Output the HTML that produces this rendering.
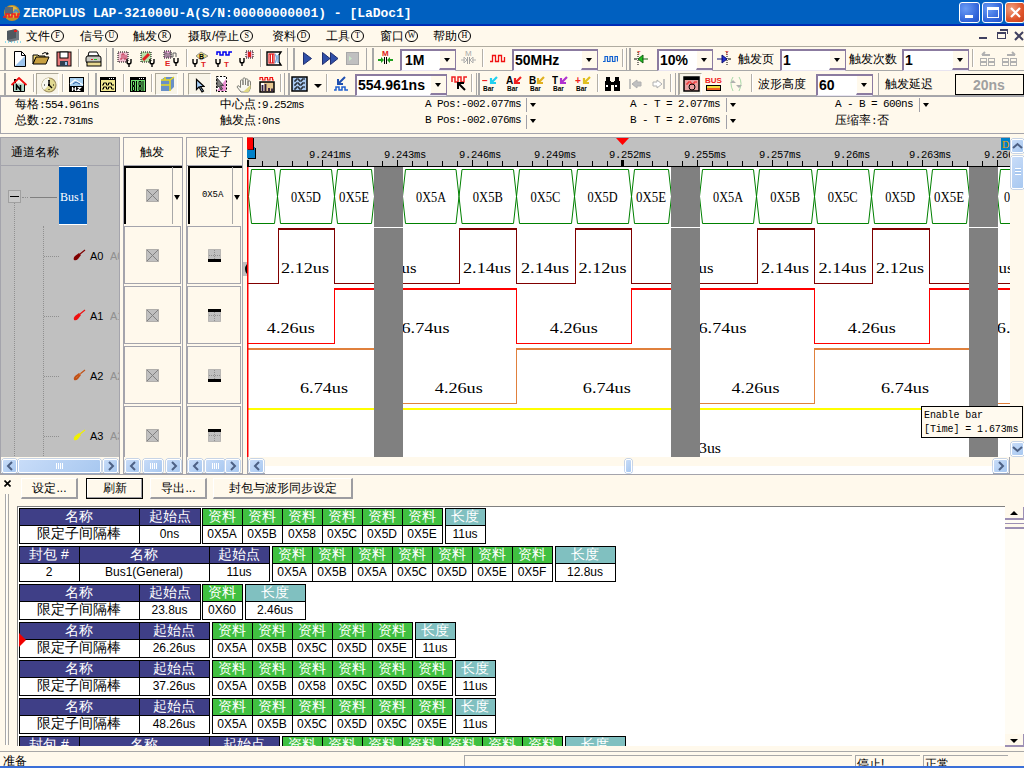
<!DOCTYPE html>
<html><head><meta charset="utf-8">
<style>
*{margin:0;padding:0;box-sizing:border-box}
html,body{width:1024px;height:768px;overflow:hidden;background:#FFF9EC;font-family:"Liberation Sans",sans-serif;font-size:12px;color:#000}
.a{position:absolute}
.t{white-space:nowrap;line-height:1}
.mono{font-family:"Liberation Mono",monospace;font-size:10px;white-space:nowrap;line-height:1}
.wb{top:2px;width:21px;height:21px;border:1px solid #fff;border-radius:3px;background:radial-gradient(circle at 30% 30%,#6A9BF5,#2F62D8 70%,#2453C4)}
.wb.x{background:radial-gradient(circle at 30% 30%,#F0A080,#E0542A 60%,#C4401C)}
.sep{width:2px;height:19px;border-left:1px solid #ACA899;border-right:1px solid #fff}
.grip{width:3px;height:21px;border-left:1px solid #fff;border-right:1px solid #ACA899}
.combo{background:#fff;border:2px solid #9C8FAE;border-right-color:#D8D0E0;border-bottom-color:#D8D0E0}
.cbtxt{font-weight:bold;font-size:15px;line-height:1;white-space:nowrap}
.dd{width:16px;background:#FFF9EC;border-left:1px solid #fff;border-right:1px solid #A898B8;border-bottom:1px solid #A898B8}
.tri{width:0;height:0;border-left:4px solid transparent;border-right:4px solid transparent;border-top:4px solid #000}
.cjk{font-size:12px;white-space:nowrap;line-height:1}
</style></head><body>

<div class="a" style="left:0;top:0;width:1024px;height:26px;background:linear-gradient(#0060C0 0,#0060C0 23.5px,#0030B8 24px,#0028B4 26px)"></div>
<svg class="a" style="left:2px;top:3px" width="20" height="20" viewBox="0 0 20 20"><circle cx="10" cy="10" r="8" fill="#C09028"/><circle cx="10" cy="9" r="6" fill="#E0B840"/><rect x="3" y="4" width="8" height="7" fill="#586878"/><path d="M1 14h3v-3h3v3h3v-3h3v3h3v-3h2" stroke="#F02020" stroke-width="1.6" fill="none"/><path d="M11 9h2v-2h2v2h2" stroke="#2080F0" stroke-width="1.2" fill="none"/></svg>
<div class="a t" style="left:23px;top:7px;color:#fff;font-family:'Liberation Mono',monospace;font-weight:bold;font-size:13px;letter-spacing:-0.03px">ZEROPLUS LAP-321000U-A(S/N:00000000001) - [LaDoc1]</div>
<div class="a wb" style="left:959px"><div class="a" style="left:5px;top:12px;width:8px;height:3px;background:#fff"></div></div>
<div class="a wb" style="left:982px"><div class="a" style="left:4px;top:4px;width:12px;height:11px;border:1px solid #fff;border-top-width:3px"></div></div>
<div class="a wb x" style="left:1005px;width:20px"><svg class="a" style="left:3px;top:3px" width="13" height="13"><path d="M2 2L11 11M11 2L2 11" stroke="#fff" stroke-width="2.2"/></svg></div>
<svg class="a" style="left:4px;top:27px" width="18" height="17"><path d="M3 4l9-2 3 2v9l-9 2-3-2z" fill="#707880"/><path d="M3 4l9-2v9l-9 2z" fill="#50585f"/><rect x="10" y="3" width="3" height="2" fill="#E02020"/><path d="M1 15h16" stroke="#20C0F0" stroke-dasharray="1 2"/></svg>
<div class="a cjk" style="left:26px;top:30px">文件<span style="display:inline-block;width:13px;height:12px;border:1px solid #000;border-radius:6px;font-size:8px;text-align:center;line-height:10px;margin-left:1px;vertical-align:top;margin-top:0px;font-family:Liberation Serif">F</span></div>
<div class="a cjk" style="left:80px;top:30px">信号<span style="display:inline-block;width:13px;height:12px;border:1px solid #000;border-radius:6px;font-size:8px;text-align:center;line-height:10px;margin-left:1px;vertical-align:top;margin-top:0px;font-family:Liberation Serif">U</span></div>
<div class="a cjk" style="left:133px;top:30px">触发<span style="display:inline-block;width:13px;height:12px;border:1px solid #000;border-radius:6px;font-size:8px;text-align:center;line-height:10px;margin-left:1px;vertical-align:top;margin-top:0px;font-family:Liberation Serif">R</span></div>
<div class="a cjk" style="left:188px;top:30px">摄取/停止<span style="display:inline-block;width:13px;height:12px;border:1px solid #000;border-radius:6px;font-size:8px;text-align:center;line-height:10px;margin-left:1px;vertical-align:top;margin-top:0px;font-family:Liberation Serif">S</span></div>
<div class="a cjk" style="left:272px;top:30px">资料<span style="display:inline-block;width:13px;height:12px;border:1px solid #000;border-radius:6px;font-size:8px;text-align:center;line-height:10px;margin-left:1px;vertical-align:top;margin-top:0px;font-family:Liberation Serif">D</span></div>
<div class="a cjk" style="left:326px;top:30px">工具<span style="display:inline-block;width:13px;height:12px;border:1px solid #000;border-radius:6px;font-size:8px;text-align:center;line-height:10px;margin-left:1px;vertical-align:top;margin-top:0px;font-family:Liberation Serif">T</span></div>
<div class="a cjk" style="left:380px;top:30px">窗口<span style="display:inline-block;width:13px;height:12px;border:1px solid #000;border-radius:6px;font-size:8px;text-align:center;line-height:10px;margin-left:1px;vertical-align:top;margin-top:0px;font-family:Liberation Serif">W</span></div>
<div class="a cjk" style="left:433px;top:30px">帮助<span style="display:inline-block;width:13px;height:12px;border:1px solid #000;border-radius:6px;font-size:8px;text-align:center;line-height:10px;margin-left:1px;vertical-align:top;margin-top:0px;font-family:Liberation Serif">H</span></div>
<div class="a" style="left:979px;top:37px;width:8px;height:2px;background:#404060"></div>
<div class="a" style="left:997px;top:32px;width:9px;height:7px;border:1px solid #404060;border-top-width:2px"></div>
<div class="a" style="left:1000px;top:29px;width:8px;height:5px;border-top:2px solid #404060;border-right:1px solid #404060"></div>
<svg class="a" style="left:1014px;top:31px" width="10" height="10"><path d="M1 1L9 9M9 1L1 9" stroke="#404060" stroke-width="2"/></svg>
<div class="a" style="left:0;top:46px;width:1024px;height:1px;background:#B0ACA0"></div>
<div class="a" style="left:0px;top:70px;width:1024px;height:1px;background:#A8A8A8"></div>
<div class="a" style="left:0px;top:95px;width:1024px;height:1px;background:#A8A8A8"></div>
<div class="a" style="left:4px;top:48px;width:2px;height:22px;background:#A8A8A8"></div>
<div class="a" style="left:112px;top:48px;width:2px;height:22px;background:#A8A8A8"></div>
<div class="a" style="left:293px;top:48px;width:2px;height:22px;background:#A8A8A8"></div>
<div class="a" style="left:372px;top:48px;width:2px;height:22px;background:#A8A8A8"></div>
<div class="a" style="left:629px;top:48px;width:2px;height:22px;background:#A8A8A8"></div>
<div class="a" style="left:106px;top:48px;width:1px;height:22px;background:#A8A8A8"></div>
<div class="a" style="left:287px;top:48px;width:1px;height:22px;background:#A8A8A8"></div>
<div class="a" style="left:366px;top:48px;width:1px;height:22px;background:#A8A8A8"></div>
<div class="a" style="left:626px;top:48px;width:1px;height:22px;background:#A8A8A8"></div>
<div class="a" style="left:4px;top:73px;width:2px;height:22px;background:#A8A8A8"></div>
<div class="a" style="left:95px;top:73px;width:2px;height:22px;background:#A8A8A8"></div>
<div class="a" style="left:188px;top:73px;width:2px;height:22px;background:#A8A8A8"></div>
<div class="a" style="left:288px;top:73px;width:2px;height:22px;background:#A8A8A8"></div>
<div class="a" style="left:478px;top:73px;width:2px;height:22px;background:#A8A8A8"></div>
<div class="a" style="left:678px;top:73px;width:2px;height:22px;background:#A8A8A8"></div>
<div class="a" style="left:88px;top:73px;width:1px;height:22px;background:#A8A8A8"></div>
<div class="a" style="left:183px;top:73px;width:1px;height:22px;background:#A8A8A8"></div>
<div class="a" style="left:284px;top:73px;width:1px;height:22px;background:#A8A8A8"></div>
<div class="a" style="left:476px;top:73px;width:1px;height:22px;background:#A8A8A8"></div>
<div class="a" style="left:675px;top:73px;width:1px;height:22px;background:#A8A8A8"></div>
<div class="a" style="left:878px;top:73px;width:1px;height:22px;background:#A8A8A8"></div>
<svg class="a" style="left:12px;top:51px" width="16" height="16" viewBox="0 0 16 16"><path d="M2.5 0.5h7l4 4v11h-11z" fill="#fff" stroke="#000"/><path d="M3 15L13 5v10z" fill="#9CC4EC"/><path d="M9.5 0.5v4h4" fill="none" stroke="#000"/></svg>
<svg class="a" style="left:32px;top:50px" width="18" height="16" viewBox="0 0 18 16"><path d="M1 5h5l1 1h6v2H4L1 14z" fill="#F0D878" stroke="#000"/><path d="M1 14l3-7h13l-3 7z" fill="#C8A040" stroke="#000"/><path d="M10 4q3-3 6 0" stroke="#000" fill="none"/><path d="M15 2l2 2-3 1" fill="#000"/></svg>
<svg class="a" style="left:56px;top:51px" width="16" height="16" viewBox="0 0 16 16"><rect x="1" y="1" width="14" height="14" fill="#E87878" stroke="#000"/><rect x="4" y="1" width="8" height="6" fill="#fff" stroke="#000"/><rect x="4" y="10" width="8" height="5" fill="#304050"/><rect x="9" y="11" width="2" height="3" fill="#9CC4EC"/></svg>
<div class="a" style="left:78px;top:49px;width:1px;height:18px;background:#B4B0A8"></div>
<div class="a" style="left:79px;top:49px;width:1px;height:18px;background:#FFFFFF"></div>
<svg class="a" style="left:85px;top:51px" width="17" height="16" viewBox="0 0 17 16"><path d="M4 1h8l2 4H3z" fill="#fff" stroke="#000"/><rect x="1" y="5" width="15" height="7" rx="2" fill="#C8C8C0" stroke="#000"/><rect x="2" y="11" width="14" height="4" fill="#E8D890" stroke="#000"/><rect x="9" y="8" width="3" height="1" fill="#20C020"/><rect x="6" y="8" width="2" height="1" fill="#E02020"/></svg>
<svg class="a" style="left:117px;top:51px" width="16" height="16" viewBox="0 0 16 16"><rect x="1" y="1" width="10" height="10" fill="#F0C0D0" stroke="#000" stroke-dasharray="1 1"/><path d="M3 8h2V3h2v5h2V4" stroke="#C03050" fill="none"/><path d="M12 12v4M10 8v3q0 2 2 2t2-2V8" stroke="#000" stroke-width="1.4" fill="none"/></svg>
<svg class="a" style="left:140px;top:51px" width="16" height="16" viewBox="0 0 16 16"><rect x="1" y="1" width="10" height="10" fill="#B8E0A8" stroke="#000" stroke-dasharray="1 1"/><path d="M3 9l6-6" stroke="#E02020" stroke-width="3"/><path d="M12 12v4M10 8v3q0 2 2 2t2-2V8" stroke="#000" stroke-width="1.4" fill="none"/></svg>
<svg class="a" style="left:162px;top:50px" width="18" height="17" viewBox="0 0 18 17"><rect x="2" y="1" width="7" height="7" fill="#E8A8D8" stroke="#000" stroke-dasharray="1 1"/><path d="M3 7V3h2v4h2V3h2v4h2V3h3v4" stroke="#606060" fill="none"/><text x="3" y="16" font-size="8" font-weight="bold" fill="#E02020" font-family="Liberation Sans">E</text><path d="M14 12v4M12 8v3q0 2 2 2t2-2V8" stroke="#000" stroke-width="1.4" fill="none"/></svg>
<div class="a" style="left:186px;top:49px;width:1px;height:18px;background:#B4B0A8"></div>
<div class="a" style="left:187px;top:49px;width:1px;height:18px;background:#FFFFFF"></div>
<svg class="a" style="left:192px;top:50px" width="18" height="17" viewBox="0 0 18 17"><path d="M4 6l5-4 7 4-7 4z" fill="#F0E078" stroke="#909090"/><text x="7" y="9" font-size="7" font-weight="bold" fill="#000" font-family="Liberation Sans">B</text><path d="M3 13v4M1 9v3q0 2 2 2t2-2V9" stroke="#000" stroke-width="1.4" fill="none"/><text x="9" y="17" font-size="8" font-weight="bold" fill="#E02020" font-family="Liberation Sans">T</text></svg>
<svg class="a" style="left:215px;top:50px" width="18" height="17" viewBox="0 0 18 17"><path d="M2 5V2h3v3h3V2h3v3h3V2h3" stroke="#0000F0" stroke-width="1.5" fill="none"/><path d="M3 13v4M1 9v3q0 2 2 2t2-2V9" stroke="#000" stroke-width="1.4" fill="none"/><text x="9" y="17" font-size="8" font-weight="bold" fill="#E02020" font-family="Liberation Sans">T</text></svg>
<svg class="a" style="left:239px;top:50px" width="16" height="17" viewBox="0 0 16 17"><rect x="7" y="1" width="7" height="7" fill="#F0B8D0" stroke="#000" stroke-dasharray="1 1"/><rect x="9" y="2" width="3" height="5" fill="#E02020"/><path d="M3 12v4M1 8v3q0 2 2 2t2-2V8" stroke="#000" stroke-width="1.4" fill="none"/></svg>
<div class="a" style="left:260px;top:49px;width:1px;height:18px;background:#B4B0A8"></div>
<div class="a" style="left:261px;top:49px;width:1px;height:18px;background:#FFFFFF"></div>
<svg class="a" style="left:266px;top:51px" width="17" height="16" viewBox="0 0 17 16"><path d="M1 1h14l-2 3v7l2 3H1z" fill="#fff" stroke="#000" stroke-width="1.4"/><rect x="3" y="3" width="5" height="9" fill="#fff" stroke="#E02020" stroke-width="1.2"/><path d="M4.5 3v9M6.5 3v9" stroke="#E02020"/><path d="M9 3q3 4 0 9M12 4v8" stroke="#80B0E0" stroke-width="1.5" fill="none"/></svg>
<svg class="a" style="left:303px;top:52px" width="9" height="13" viewBox="0 0 9 13"><path d="M0.5 0.5L8.5 6.5L0.5 12.5z" fill="#3050A8" stroke="#203070"/></svg>
<svg class="a" style="left:322px;top:52px" width="17" height="13" viewBox="0 0 17 13"><path d="M0.5 0.5L8 6.5L0.5 12.5z" fill="#3050A8" stroke="#203070"/><path d="M8.5 0.5L16 6.5L8.5 12.5z" fill="#3050A8" stroke="#203070"/></svg>
<svg class="a" style="left:346px;top:52px" width="14" height="13" viewBox="0 0 14 13"><rect x="0.5" y="0.5" width="12" height="12" fill="#C0C0C0" stroke="#A8A8A8"/><path d="M3 4l3 2.5-3 2.5z" fill="#C8E8C8"/></svg>
<svg class="a" style="left:377px;top:49px" width="17" height="17" viewBox="0 0 17 17"><text x="5" y="7" font-size="8" font-weight="bold" fill="#E02020" font-family="Liberation Sans">M</text><path d="M1 11h4M12 11h4" stroke="#20A020" stroke-width="2"/><path d="M4 8l3 3-3 3zM13 8l-3 3 3 3z" fill="#20A020"/><path d="M7.5 8v7M9.5 8v7" stroke="#000"/></svg>
<div class="a" style="left:400px;top:49px;width:56px;height:22px;background:#fff;border-top:2px solid #8B7BA0;border-left:2px solid #8B7BA0;border-right:1px solid #8B7BA0;border-bottom:1px solid #E8E4F0"></div>
<div class="a" style="left:439px;top:51px;width:16px;height:19px;background:#FFF9EC;border-left:1px solid #fff;border-bottom:2px solid #8B7BA0"></div>
<div class="a tri" style="left:444px;top:58px;border-width:4px 3.5px 0 3.5px"></div>
<div class="a cbtxt" style="left:405px;top:53px;font-size:14px">1M</div>
<svg class="a" style="left:460px;top:49px" width="17" height="17" viewBox="0 0 17 17"><text x="5" y="7" font-size="8" fill="#A8A8A8" font-family="Liberation Sans">M</text><path d="M1 11h4M12 11h4" stroke="#B0B0B0" stroke-width="1"/><path d="M4 8l3 3-3 3zM13 8l-3 3 3 3z" fill="none" stroke="#B0B0B0"/><path d="M7.5 8v7M9.5 8v7" stroke="#A0A0A0"/></svg>
<div class="a" style="left:482px;top:49px;width:1px;height:18px;background:#B4B0A8"></div>
<div class="a" style="left:483px;top:49px;width:1px;height:18px;background:#FFFFFF"></div>
<svg class="a" style="left:490px;top:54px" width="16" height="9" viewBox="0 0 16 9"><path d="M0 7.5h2.5V1.5h3v6h3v-6h3v6h3V3" stroke="#F01010" stroke-width="1.3" fill="none"/></svg>
<div class="a" style="left:512px;top:49px;width:86px;height:22px;background:#fff;border-top:2px solid #8B7BA0;border-left:2px solid #8B7BA0;border-right:1px solid #8B7BA0;border-bottom:1px solid #E8E4F0"></div>
<div class="a" style="left:581px;top:51px;width:16px;height:19px;background:#FFF9EC;border-left:1px solid #fff;border-bottom:2px solid #8B7BA0"></div>
<div class="a tri" style="left:586px;top:58px;border-width:4px 3.5px 0 3.5px"></div>
<div class="a cbtxt" style="left:515px;top:53px;font-size:14px">50MHz</div>
<svg class="a" style="left:603px;top:55px" width="15" height="8" viewBox="0 0 15 8"><path d="M0 6.5h2V1.5h2.5v5H7V1.5h2.5v5H12V1.5h2.5v5" stroke="#1060D0" stroke-width="1.2" fill="none"/></svg>
<div class="a" style="left:622px;top:49px;width:1px;height:18px;background:#B4B0A8"></div>
<div class="a" style="left:623px;top:49px;width:1px;height:18px;background:#FFFFFF"></div>
<svg class="a" style="left:633px;top:49px" width="16" height="17" viewBox="0 0 16 17"><path d="M5 3v13" stroke="#000" stroke-dasharray="1 1"/><text x="4" y="6" font-size="6" fill="#E02020" font-family="Liberation Sans">T</text><path d="M15 10H9M10 6l-5 4 5 4z" fill="#20C020" stroke="#106010"/><path d="M1 10h3" stroke="#000"/></svg>
<div class="a" style="left:657px;top:49px;width:56px;height:22px;background:#fff;border-top:2px solid #8B7BA0;border-left:2px solid #8B7BA0;border-right:1px solid #8B7BA0;border-bottom:1px solid #E8E4F0"></div>
<div class="a" style="left:696px;top:51px;width:16px;height:19px;background:#FFF9EC;border-left:1px solid #fff;border-bottom:2px solid #8B7BA0"></div>
<div class="a tri" style="left:701px;top:58px;border-width:4px 3.5px 0 3.5px"></div>
<div class="a cbtxt" style="left:660px;top:53px;font-size:14px">10%</div>
<svg class="a" style="left:716px;top:49px" width="16" height="17" viewBox="0 0 16 17"><path d="M11 3v13" stroke="#000" stroke-dasharray="1 1"/><text x="9" y="6" font-size="6" fill="#E02020" font-family="Liberation Sans">T</text><path d="M1 10h6M6 6l5 4-5 4z" fill="#2030D0" stroke="#101070"/><path d="M12 10h3" stroke="#000"/></svg>
<div class="a cjk" style="left:738px;top:53px">触发页</div>
<div class="a" style="left:780px;top:49px;width:66px;height:22px;background:#fff;border-top:2px solid #8B7BA0;border-left:2px solid #8B7BA0;border-right:1px solid #8B7BA0;border-bottom:1px solid #E8E4F0"></div>
<div class="a" style="left:829px;top:51px;width:16px;height:19px;background:#FFF9EC;border-left:1px solid #fff;border-bottom:2px solid #8B7BA0"></div>
<div class="a tri" style="left:834px;top:58px;border-width:4px 3.5px 0 3.5px"></div>
<div class="a cbtxt" style="left:783px;top:53px;font-size:14px">1</div>
<div class="a cjk" style="left:849px;top:53px">触发次数</div>
<div class="a" style="left:902px;top:49px;width:67px;height:22px;background:#fff;border-top:2px solid #8B7BA0;border-left:2px solid #8B7BA0;border-right:1px solid #8B7BA0;border-bottom:1px solid #E8E4F0"></div>
<div class="a" style="left:952px;top:51px;width:16px;height:19px;background:#FFF9EC;border-left:1px solid #fff;border-bottom:2px solid #8B7BA0"></div>
<div class="a tri" style="left:957px;top:58px;border-width:4px 3.5px 0 3.5px"></div>
<div class="a cbtxt" style="left:905px;top:53px;font-size:14px">1</div>
<div class="a" style="left:972px;top:49px;width:1px;height:18px;background:#B4B0A8"></div>
<div class="a" style="left:973px;top:49px;width:1px;height:18px;background:#FFFFFF"></div>
<svg class="a" style="left:979px;top:51px" width="17" height="16" viewBox="0 0 17 16"><path d="M3 4h8M3 4l3-3" stroke="#B0B0B0" stroke-width="2" fill="none"/><rect x="1.5" y="7.5" width="6" height="3" fill="none" stroke="#B0B0B0"/><rect x="9.5" y="7.5" width="6" height="3" fill="none" stroke="#B0B0B0"/><rect x="1.5" y="11.5" width="6" height="3" fill="none" stroke="#B0B0B0"/><rect x="9.5" y="11.5" width="6" height="3" fill="none" stroke="#B0B0B0"/></svg>
<svg class="a" style="left:1001px;top:51px" width="17" height="16" viewBox="0 0 17 16"><path d="M6 4h8M14 4l-3-3" stroke="#B0B0B0" stroke-width="2" fill="none"/><rect x="1.5" y="7.5" width="6" height="3" fill="none" stroke="#B0B0B0"/><rect x="9.5" y="7.5" width="6" height="3" fill="none" stroke="#B0B0B0"/><rect x="1.5" y="11.5" width="6" height="3" fill="none" stroke="#B0B0B0"/><rect x="9.5" y="11.5" width="6" height="3" fill="none" stroke="#B0B0B0"/></svg>
<svg class="a" style="left:11px;top:77px" width="16" height="15" viewBox="0 0 16 15"><path d="M2.5 6.5v8h11v-8" fill="#B0D8C8" stroke="#000"/><rect x="3" y="2" width="2" height="4" fill="#000"/><path d="M0.5 8l7.5-7 7.5 7" stroke="#F01010" stroke-width="1.8" fill="none"/><path d="M5.5 13V8l4 5V8" stroke="#000" stroke-width="1.5" fill="none"/></svg>
<div class="a" style="left:33px;top:74px;width:1px;height:18px;background:#B4B0A8"></div>
<div class="a" style="left:34px;top:74px;width:1px;height:18px;background:#FFFFFF"></div>
<div class="a" style="left:36px;top:73px;width:23px;height:22px;border-left:1px solid #ACA899;border-top:1px solid #ACA899;border-right:1px solid #fff;border-bottom:1px solid #fff;background:#F8F4E8"></div>
<svg class="a" style="left:41px;top:77px" width="16" height="16" viewBox="0 0 16 16"><circle cx="8" cy="8" r="7" fill="#E0D890" stroke="#A09060" stroke-width="1.2"/><path d="M8 1A7 7 0 0 0 3 13L8 8z" fill="#F8F8F0"/><path d="M8 3v5l3 3" stroke="#000" stroke-width="1.4" fill="none"/><rect x="7" y="7" width="2" height="2" fill="#000"/><rect x="3" y="7.5" width="1" height="1" fill="#000"/><rect x="12" y="7.5" width="1" height="1" fill="#000"/><rect x="7.5" y="12" width="1" height="1" fill="#000"/><rect x="7.5" y="3" width="1" height="1" fill="#000"/></svg>
<div class="a" style="left:62px;top:74px;width:1px;height:18px;background:#B4B0A8"></div>
<div class="a" style="left:63px;top:74px;width:1px;height:18px;background:#FFFFFF"></div>
<svg class="a" style="left:69px;top:77px" width="15" height="15" viewBox="0 0 15 15"><rect x="0" y="0" width="15" height="15" fill="#000"/><rect x="1" y="1" width="13" height="8" fill="#A8D0F0"/><path d="M1 7l5-4 8 5" stroke="#fff" stroke-width="1.2" fill="none"/><path d="M4 7l3-2 4 2" stroke="#3060A0" fill="none"/><path d="M3.5 10v4M6.5 10v4M3.5 12h3M8.5 10.5h3l-3 3h3" stroke="#fff" stroke-width="1.2" fill="none"/></svg>
<svg class="a" style="left:100px;top:77px" width="16" height="15" viewBox="0 0 16 15"><rect x="0.5" y="0.5" width="15" height="14" fill="#F0E890" stroke="#000"/><rect x="0" y="0" width="16" height="3" fill="#000"/><rect x="9" y="1" width="1" height="1" fill="#fff"/><rect x="11" y="1" width="1" height="1" fill="#fff"/><rect x="13" y="1" width="1" height="1" fill="#fff"/><path d="M2 8h1.5V6h3v2h2V6h3v2H14M2 12h1.5v-2h3v2h2v-2h3v2H14" stroke="#000" fill="none"/></svg>
<div class="a" style="left:123px;top:74px;width:1px;height:18px;background:#B4B0A8"></div>
<div class="a" style="left:124px;top:74px;width:1px;height:18px;background:#FFFFFF"></div>
<svg class="a" style="left:130px;top:77px" width="16" height="15" viewBox="0 0 16 15"><rect x="0.5" y="0.5" width="15" height="14" fill="#70E070" stroke="#000"/><rect x="0" y="0" width="16" height="3" fill="#000"/><rect x="9" y="1" width="1" height="1" fill="#fff"/><rect x="11" y="1" width="1" height="1" fill="#fff"/><rect x="13" y="1" width="1" height="1" fill="#fff"/><path d="M2.5 4.5h2v4h-2zM9 4.5h2v4H9zM2.5 9.5h2v4h-2zM9 9.5h2v4H9z" stroke="#000" fill="none"/><path d="M6.5 4v5M13 4v5M6.5 9v5M13 9v5" stroke="#000"/></svg>
<div class="a" style="left:151px;top:74px;width:1px;height:18px;background:#B4B0A8"></div>
<div class="a" style="left:152px;top:74px;width:1px;height:18px;background:#FFFFFF"></div>
<div class="a" style="left:155px;top:73px;width:23px;height:22px;border-left:1px solid #ACA899;border-top:1px solid #ACA899;border-right:1px solid #fff;border-bottom:1px solid #fff;background:#F8F4E8"></div>
<svg class="a" style="left:159px;top:76px" width="17" height="16" viewBox="0 0 17 16"><path d="M2 4l4-3h9v10l-4 4H2z" fill="#6890C8"/><path d="M2 4h9v11M11 4l4-3M6 1v3M2 9h9" stroke="#E8D820" stroke-width="1.5" fill="none"/></svg>
<div class="a" style="left:188px;top:73px;width:23px;height:22px;border-left:1px solid #ACA899;border-top:1px solid #ACA899;border-right:1px solid #fff;border-bottom:1px solid #fff;background:#F8F4E8"></div>
<svg class="a" style="left:195px;top:78px" width="10" height="16" viewBox="0 0 10 16"><path d="M1.5 1.5v10l2.5-2.5 3 5 1.5-1-3-4.5h3.5z" fill="#A8D0F8" stroke="#000" stroke-width="1.2"/></svg>
<svg class="a" style="left:215px;top:75px" width="13" height="18" viewBox="0 0 13 18"><rect x="1.5" y="1.5" width="10" height="15" fill="#fff" stroke="#000" stroke-dasharray="2 1.5"/><path d="M11 4v12H2z" fill="#E890D0"/><path d="M2 3v10l2-2 2 4 1.5-1-2-3.5h3z" fill="#808080" stroke="#303030" stroke-width="0.8"/></svg>
<svg class="a" style="left:236px;top:77px" width="16" height="16" viewBox="0 0 16 16"><path d="M5 15l-4-5 1-1.5 2.5 2V4q0-1.2 1.2-1.2T7 4v4V2q0-1.2 1.2-1.2T9.5 2v6V3q0-1.2 1.2-1.2T12 3v6V5q0-1.2 1.2-1.2T14.5 5v6l-2 4z" fill="#F8F8F0" stroke="#808078"/><path d="M7 15l7.5-7v3l-2 4z" fill="#E0D880"/></svg>
<svg class="a" style="left:259px;top:76px" width="16" height="17" viewBox="0 0 16 17"><path d="M1 4V1.5h2.5V4H6V1.5h2.5V4H11V1.5h2.5V4H15" stroke="#F01010" stroke-width="1.2" fill="none"/><rect x="1" y="6" width="14" height="10" fill="#E8C890" stroke="#000" stroke-width="1.5"/><rect x="2" y="7" width="3" height="8" fill="#fff"/><path d="M3.5 15.5V9M6.5 15.5V8M10 15.5v-3.5M13 15.5v-3" stroke="#302040" stroke-width="1.8"/></svg>
<div class="a" style="left:280px;top:74px;width:1px;height:18px;background:#B4B0A8"></div>
<div class="a" style="left:281px;top:74px;width:1px;height:18px;background:#FFFFFF"></div>
<svg class="a" style="left:291px;top:76px" width="17" height="16" viewBox="0 0 17 16"><rect x="1" y="1" width="15" height="14" fill="#A8C8F0" stroke="#000" stroke-width="1.5"/><path d="M3 5h2V3h3v2h3V3h3M3 9h2V7h3v2h3V7h3M3 13h2v-2h3v2h3v-2h3" stroke="#000" fill="none"/></svg>
<div class="a tri" style="left:314px;top:84px;border-width:4px 4px 0 4px"></div>
<div class="a" style="left:326px;top:74px;width:1px;height:18px;background:#B4B0A8"></div>
<div class="a" style="left:327px;top:74px;width:1px;height:18px;background:#FFFFFF"></div>
<svg class="a" style="left:333px;top:76px" width="16" height="16" viewBox="0 0 16 16"><path d="M1 14h2v-3h3v3h3v-3h3v3h3" stroke="#2060D0" stroke-width="1.5" fill="none"/><path d="M12 1L6 7M5 3v5h5" stroke="#2050B0" stroke-width="2" fill="none"/></svg>
<div class="a" style="left:355px;top:74px;width:92px;height:22px;background:#fff;border-top:2px solid #8B7BA0;border-left:2px solid #8B7BA0;border-right:1px solid #8B7BA0;border-bottom:1px solid #E8E4F0"></div>
<div class="a" style="left:430px;top:76px;width:16px;height:19px;background:#FFF9EC;border-left:1px solid #fff;border-bottom:2px solid #8B7BA0"></div>
<div class="a tri" style="left:435px;top:83px;border-width:4px 3.5px 0 3.5px"></div>
<div class="a cbtxt" style="left:358px;top:78px;font-size:14px">554.961ns</div>
<svg class="a" style="left:451px;top:75px" width="17" height="17" viewBox="0 0 17 17"><path d="M1 7V2h3v5h3V2h3v5h3V2h3" stroke="#F02020" stroke-width="1.5" fill="none"/><path d="M14 15L8 9M7 14V8h6" stroke="#000" stroke-width="2" fill="none"/></svg>
<div class="a" style="left:471px;top:74px;width:1px;height:18px;background:#B4B0A8"></div>
<div class="a" style="left:472px;top:74px;width:1px;height:18px;background:#FFFFFF"></div>
<svg class="a" style="left:482px;top:75px" width="17" height="17" viewBox="0 0 17 17"><text x="0" y="9" font-size="10" font-weight="bold" fill="#F02020" font-family="Liberation Sans">−</text><path d="M15 2L10 7M9 3v5h5" stroke="#20D0F0" stroke-width="2.2" fill="none"/><text x="1" y="16" font-size="6.5" font-weight="bold" fill="#000" font-family="Liberation Sans">Bar</text></svg>
<svg class="a" style="left:506px;top:75px" width="17" height="17" viewBox="0 0 17 17"><text x="0" y="9" font-size="10" font-weight="bold" fill="#000" font-family="Liberation Sans">A</text><path d="M15 2L10 7M9 3v5h5" stroke="#F02020" stroke-width="2.2" fill="none"/><text x="1" y="16" font-size="6.5" font-weight="bold" fill="#000" font-family="Liberation Sans">Bar</text></svg>
<svg class="a" style="left:529px;top:75px" width="17" height="17" viewBox="0 0 17 17"><text x="0" y="9" font-size="10" font-weight="bold" fill="#000" font-family="Liberation Sans">B</text><path d="M15 2L10 7M9 3v5h5" stroke="#E0B020" stroke-width="2.2" fill="none"/><text x="1" y="16" font-size="6.5" font-weight="bold" fill="#000" font-family="Liberation Sans">Bar</text></svg>
<svg class="a" style="left:552px;top:75px" width="17" height="17" viewBox="0 0 17 17"><text x="0" y="9" font-size="10" font-weight="bold" fill="#000" font-family="Liberation Sans">T</text><path d="M15 2L10 7M9 3v5h5" stroke="#B030D0" stroke-width="2.2" fill="none"/><text x="1" y="16" font-size="6.5" font-weight="bold" fill="#000" font-family="Liberation Sans">Bar</text></svg>
<svg class="a" style="left:575px;top:75px" width="17" height="17" viewBox="0 0 17 17"><text x="0" y="9" font-size="10" font-weight="bold" fill="#F02020" font-family="Liberation Sans">+</text><path d="M15 2L10 7M9 3v5h5" stroke="#E0C020" stroke-width="2.2" fill="none"/><text x="1" y="16" font-size="6.5" font-weight="bold" fill="#000" font-family="Liberation Sans">Bar</text></svg>
<div class="a" style="left:597px;top:74px;width:1px;height:18px;background:#B4B0A8"></div>
<div class="a" style="left:598px;top:74px;width:1px;height:18px;background:#FFFFFF"></div>
<svg class="a" style="left:604px;top:76px" width="17" height="16" viewBox="0 0 17 16"><rect x="1" y="5" width="6" height="10" fill="#000"/><rect x="10" y="5" width="6" height="10" fill="#000"/><rect x="2" y="1" width="4" height="5" fill="#000"/><rect x="11" y="1" width="4" height="5" fill="#000"/><rect x="6" y="6" width="5" height="3" fill="#000"/><rect x="2" y="9" width="2" height="2" fill="#fff"/><rect x="11" y="9" width="2" height="2" fill="#fff"/></svg>
<svg class="a" style="left:628px;top:76px" width="15" height="16" viewBox="0 0 15 16"><path d="M2 3v10" stroke="#B0B0B0" stroke-width="1.5"/><path d="M4 8l5-4v2h4v4H9v2z" fill="#C0C0C0" stroke="#B0B0B0"/></svg>
<svg class="a" style="left:651px;top:76px" width="15" height="16" viewBox="0 0 15 16"><path d="M13 3v10" stroke="#B0B0B0" stroke-width="1.5"/><path d="M11 8L6 4v2H2v4h4v2z" fill="#fff" stroke="#B0B0B0"/></svg>
<div class="a" style="left:670px;top:74px;width:1px;height:18px;background:#B4B0A8"></div>
<div class="a" style="left:671px;top:74px;width:1px;height:18px;background:#FFFFFF"></div>
<div class="a" style="left:679px;top:73px;width:23px;height:22px;border-left:1px solid #ACA899;border-top:1px solid #ACA899;border-right:1px solid #fff;border-bottom:1px solid #fff;background:#F8F4E8"></div>
<svg class="a" style="left:683px;top:76px" width="17" height="16" viewBox="0 0 17 16"><rect x="1" y="1" width="15" height="14" fill="#E8A0A0" stroke="#000" stroke-width="1.5"/><rect x="1" y="1" width="15" height="3" fill="#000"/><path d="M3 8h2V6h3v2h3V6h3" stroke="#F02020" fill="none"/><circle cx="9" cy="11" r="3" fill="none" stroke="#000"/></svg>
<svg class="a" style="left:705px;top:75px" width="17" height="17" viewBox="0 0 17 17"><text x="0" y="8" font-size="8" font-weight="bold" fill="#F02020" font-family="Liberation Sans">BUS</text><rect x="1" y="10" width="15" height="6" fill="#000"/><rect x="2" y="11" width="13" height="2" fill="#F0E040"/><rect x="2" y="13" width="13" height="2" fill="#F06020"/></svg>
<svg class="a" style="left:729px;top:76px" width="15" height="16" viewBox="0 0 15 16"><path d="M4 1q-4 6 0 14M10 1q4 6 0 14" stroke="#A8D8A8" fill="none"/><path d="M1 7l3-3 3 3zM7 9l3 3 3-3z" fill="#B0B0B0"/></svg>
<div class="a" style="left:751px;top:74px;width:1px;height:18px;background:#B4B0A8"></div>
<div class="a" style="left:752px;top:74px;width:1px;height:18px;background:#FFFFFF"></div>
<div class="a cjk" style="left:758px;top:78px">波形高度</div>
<div class="a" style="left:816px;top:74px;width:57px;height:22px;background:#fff;border-top:2px solid #8B7BA0;border-left:2px solid #8B7BA0;border-right:1px solid #8B7BA0;border-bottom:1px solid #E8E4F0"></div>
<div class="a" style="left:856px;top:76px;width:16px;height:19px;background:#FFF9EC;border-left:1px solid #fff;border-bottom:2px solid #8B7BA0"></div>
<div class="a tri" style="left:861px;top:83px;border-width:4px 3.5px 0 3.5px"></div>
<div class="a cbtxt" style="left:819px;top:78px;font-size:14px">60</div>
<div class="a cjk" style="left:885px;top:78px">触发延迟</div>
<div class="a" style="left:955px;top:74px;width:69px;height:21px;border:1px solid #000;background:#FFF9EC"></div>
<div class="a cbtxt" style="left:973px;top:78px;color:#A0A0A0;font-size:14px">20ns</div>
<div class="a" style="left:1px;top:96px;width:1023px;height:1px;background:#A4A4AC"></div>
<div class="a" style="left:1px;top:133px;width:1023px;height:1px;background:#A4A4AC"></div>
<div class="a" style="left:0px;top:96px;width:1px;height:38px;background:#A4A4AC"></div>
<div class="a t" style="left:15px;top:98px"><span class="cjk">每格</span><span style="font-family:'Liberation Mono',monospace;font-size:11px;letter-spacing:-0.6px">:554.961ns</span></div>
<div class="a t" style="left:15px;top:114px"><span class="cjk">总数</span><span style="font-family:'Liberation Mono',monospace;font-size:11px;letter-spacing:-0.6px">:22.731ms</span></div>
<div class="a t" style="left:220px;top:98px"><span class="cjk">中心点</span><span style="font-family:'Liberation Mono',monospace;font-size:11px;letter-spacing:-0.6px">:9.252ms</span></div>
<div class="a t" style="left:220px;top:114px"><span class="cjk">触发点</span><span style="font-family:'Liberation Mono',monospace;font-size:11px;letter-spacing:-0.6px">:0ns</span></div>
<div class="a mono" style="left:425px;top:99px;font-size:11px;letter-spacing:-0.6px;">A Pos:-002.077ms</div>
<div class="a mono" style="left:425px;top:115px;font-size:11px;letter-spacing:-0.6px;">B Pos:-002.076ms</div>
<div class="a mono" style="left:630px;top:99px;font-size:11px;letter-spacing:-0.6px;">A - T = 2.077ms</div>
<div class="a mono" style="left:630px;top:115px;font-size:11px;letter-spacing:-0.6px;">B - T = 2.076ms</div>
<div class="a mono" style="left:835px;top:99px;font-size:11px;letter-spacing:-0.6px;">A - B = 600ns</div>
<div class="a t" style="left:835px;top:114px"><span class="cjk">压缩率</span><span style="font-family:'Liberation Mono',monospace;font-size:11px;letter-spacing:-0.6px">:<span class="cjk">否</span></span></div>
<div class="a" style="left:526px;top:98px;width:1px;height:14px;background:#A0A0A8"></div>
<div class="a tri" style="left:530px;top:103px;border-width:4px 3.5px 0 3.5px"></div>
<div class="a" style="left:726px;top:98px;width:1px;height:14px;background:#A0A0A8"></div>
<div class="a tri" style="left:730px;top:103px;border-width:4px 3.5px 0 3.5px"></div>
<div class="a" style="left:919px;top:98px;width:1px;height:14px;background:#A0A0A8"></div>
<div class="a tri" style="left:923px;top:103px;border-width:4px 3.5px 0 3.5px"></div>
<div class="a" style="left:526px;top:115px;width:1px;height:14px;background:#A0A0A8"></div>
<div class="a tri" style="left:530px;top:119px;border-width:4px 3.5px 0 3.5px"></div>
<div class="a" style="left:726px;top:115px;width:1px;height:14px;background:#A0A0A8"></div>
<div class="a tri" style="left:730px;top:119px;border-width:4px 3.5px 0 3.5px"></div>
<div class="a" style="left:0;top:137px;width:120px;height:321px;background:#C0C0C0;border-top:1px solid #A4A4AC;border-left:1px solid #A4A4AC;border-right:1px solid #A4A4AC"></div>
<div class="a" style="left:1px;top:165px;width:118px;height:1px;background:#A4A4AC"></div>
<div class="a cjk" style="left:11px;top:146px">通道名称</div>
<div class="a" style="left:8px;top:190px;width:13px;height:13px;border:1px solid #A0A0A0;background:#C8C8C8"></div>
<div class="a" style="left:10px;top:196px;width:9px;height:1px;background:#000"></div>
<div class="a" style="left:22px;top:197px;width:6px;border-top:1px dotted #909090"></div>
<div class="a" style="left:30px;top:197px;width:27px;height:1px;background:#808080"></div>
<div class="a" style="left:14px;top:203px;height:255px;border-left:1px dotted #909090"></div>
<div class="a" style="left:43px;top:226px;height:232px;border-left:1px dotted #909090"></div>
<div class="a" style="left:59px;top:166px;width:28px;height:59px;background:#005CBC;border-top:1px solid #fff;border-bottom:1px solid #fff"></div>
<div class="a t" style="left:60px;top:191px;color:#fff;font-family:'Liberation Serif',serif;font-weight:normal;font-size:12px;letter-spacing:0px">Bus1</div>
<div class="a" style="left:44px;top:256px;width:15px;border-top:1px dotted #909090"></div>
<svg class="a" style="left:73px;top:249px" width="13" height="13" viewBox="0 0 13 13"><path d="M1 11q-1-2 1-4l4-3 2 2-3 4q-2 2-4 1z" fill="#800000"/><path d="M7 5l5-4" stroke="#800000" stroke-width="1.2"/></svg>
<div class="a t" style="left:90px;top:251px;font-size:11px;font-family:Liberation Sans">A0</div>
<div class="a t" style="left:110px;top:251px;font-size:11px;color:#909090;width:9px;overflow:hidden">A0</div>
<div class="a" style="left:44px;top:316px;width:15px;border-top:1px dotted #909090"></div>
<svg class="a" style="left:73px;top:309px" width="13" height="13" viewBox="0 0 13 13"><path d="M1 11q-1-2 1-4l4-3 2 2-3 4q-2 2-4 1z" fill="#F01010"/><path d="M7 5l5-4" stroke="#F01010" stroke-width="1.2"/></svg>
<div class="a t" style="left:90px;top:311px;font-size:11px;font-family:Liberation Sans">A1</div>
<div class="a t" style="left:110px;top:311px;font-size:11px;color:#909090;width:9px;overflow:hidden">A1</div>
<div class="a" style="left:44px;top:376px;width:15px;border-top:1px dotted #909090"></div>
<svg class="a" style="left:73px;top:369px" width="13" height="13" viewBox="0 0 13 13"><path d="M1 11q-1-2 1-4l4-3 2 2-3 4q-2 2-4 1z" fill="#C05018"/><path d="M7 5l5-4" stroke="#C05018" stroke-width="1.2"/><path d="M3 9l5-5" stroke="#E08030" stroke-width="1" stroke-dasharray="1 1"/></svg>
<div class="a t" style="left:90px;top:371px;font-size:11px;font-family:Liberation Sans">A2</div>
<div class="a t" style="left:110px;top:371px;font-size:11px;color:#909090;width:9px;overflow:hidden">A2</div>
<div class="a" style="left:44px;top:436px;width:15px;border-top:1px dotted #909090"></div>
<svg class="a" style="left:73px;top:429px" width="13" height="13" viewBox="0 0 13 13"><path d="M1 11q-1-2 1-4l4-3 2 2-3 4q-2 2-4 1z" fill="#F0F000"/><path d="M7 5l5-4" stroke="#F0F000" stroke-width="1.2"/></svg>
<div class="a t" style="left:90px;top:431px;font-size:11px;font-family:Liberation Sans">A3</div>
<div class="a t" style="left:110px;top:431px;font-size:11px;color:#909090;width:9px;overflow:hidden">A3</div>
<div class="a" style="left:123px;top:137px;width:60px;height:321px;background:#FFF9EC;border:1px solid #A4A4AC;border-bottom:none"></div>
<div class="a" style="left:124px;top:165px;width:58px;height:1px;background:#A4A4AC"></div>
<div class="a cjk" style="left:140px;top:146px">触发</div>
<div class="a" style="left:186px;top:137px;width:57px;height:321px;background:#FFF9EC;border:1px solid #A4A4AC;border-bottom:none"></div>
<div class="a" style="left:187px;top:165px;width:55px;height:1px;background:#A4A4AC"></div>
<div class="a cjk" style="left:196px;top:146px">限定子</div>
<div class="a" style="left:124px;top:166px;width:58px;height:58px;border-top:2px solid #000;border-left:2px solid #000"></div>
<div class="a" style="left:172px;top:167px;width:1px;height:57px;background:#A8A8A8"></div>
<div class="a tri" style="left:174px;top:195px;border-width:5px 3px 0 3px"></div>
<div class="a" style="left:188px;top:166px;width:54px;height:58px;border-top:2px solid #000;border-left:2px solid #000"></div>
<div class="a" style="left:232px;top:167px;width:1px;height:57px;background:#A8A8A8"></div>
<div class="a tri" style="left:234px;top:195px;border-width:5px 3px 0 3px"></div>
<svg class="a" style="left:146px;top:189px" width="13" height="13" viewBox="0 0 13 13"><rect x="0.5" y="0.5" width="12" height="12" fill="#C0C0C0" stroke="#808080" stroke-dasharray="1 1"/><path d="M1 1L12 12M12 1L1 12" stroke="#808080"/></svg>
<div class="a mono" style="left:202px;top:191px;font-size:9px;letter-spacing:-0.1px">0X5A</div>
<div class="a" style="left:124px;top:226px;width:57px;height:58px;border:1px solid #A4A4AC"></div>
<div class="a" style="left:187px;top:226px;width:54px;height:58px;border:1px solid #A4A4AC"></div>
<svg class="a" style="left:146px;top:249px" width="13" height="13" viewBox="0 0 13 13"><rect x="0.5" y="0.5" width="12" height="12" fill="#C0C0C0" stroke="#808080" stroke-dasharray="1 1"/><path d="M1 1L12 12M12 1L1 12" stroke="#808080"/></svg>
<svg class="a" style="left:208px;top:249px" width="13" height="13" viewBox="0 0 13 13"><rect x="0.5" y="0.5" width="12" height="12" fill="#C0C0C0" stroke="#909090" stroke-dasharray="1 1"/><path d="M6.5 1v11M1 6.5h11" stroke="#909090" stroke-dasharray="1 1"/></svg>
<div class="a" style="left:208px;top:259px;width:13px;height:3px;background:#000"></div>
<div class="a" style="left:124px;top:286px;width:57px;height:58px;border:1px solid #A4A4AC"></div>
<div class="a" style="left:187px;top:286px;width:54px;height:58px;border:1px solid #A4A4AC"></div>
<svg class="a" style="left:146px;top:309px" width="13" height="13" viewBox="0 0 13 13"><rect x="0.5" y="0.5" width="12" height="12" fill="#C0C0C0" stroke="#808080" stroke-dasharray="1 1"/><path d="M1 1L12 12M12 1L1 12" stroke="#808080"/></svg>
<svg class="a" style="left:208px;top:309px" width="13" height="13" viewBox="0 0 13 13"><rect x="0.5" y="0.5" width="12" height="12" fill="#C0C0C0" stroke="#909090" stroke-dasharray="1 1"/><path d="M6.5 1v11M1 6.5h11" stroke="#909090" stroke-dasharray="1 1"/></svg>
<div class="a" style="left:208px;top:309px;width:13px;height:3px;background:#000"></div>
<div class="a" style="left:124px;top:346px;width:57px;height:58px;border:1px solid #A4A4AC"></div>
<div class="a" style="left:187px;top:346px;width:54px;height:58px;border:1px solid #A4A4AC"></div>
<svg class="a" style="left:146px;top:369px" width="13" height="13" viewBox="0 0 13 13"><rect x="0.5" y="0.5" width="12" height="12" fill="#C0C0C0" stroke="#808080" stroke-dasharray="1 1"/><path d="M1 1L12 12M12 1L1 12" stroke="#808080"/></svg>
<svg class="a" style="left:208px;top:369px" width="13" height="13" viewBox="0 0 13 13"><rect x="0.5" y="0.5" width="12" height="12" fill="#C0C0C0" stroke="#909090" stroke-dasharray="1 1"/><path d="M6.5 1v11M1 6.5h11" stroke="#909090" stroke-dasharray="1 1"/></svg>
<div class="a" style="left:208px;top:379px;width:13px;height:3px;background:#000"></div>
<div class="a" style="left:124px;top:406px;width:57px;height:58px;border:1px solid #A4A4AC"></div>
<div class="a" style="left:187px;top:406px;width:54px;height:58px;border:1px solid #A4A4AC"></div>
<svg class="a" style="left:146px;top:429px" width="13" height="13" viewBox="0 0 13 13"><rect x="0.5" y="0.5" width="12" height="12" fill="#C0C0C0" stroke="#808080" stroke-dasharray="1 1"/><path d="M1 1L12 12M12 1L1 12" stroke="#808080"/></svg>
<svg class="a" style="left:208px;top:429px" width="13" height="13" viewBox="0 0 13 13"><rect x="0.5" y="0.5" width="12" height="12" fill="#C0C0C0" stroke="#909090" stroke-dasharray="1 1"/><path d="M6.5 1v11M1 6.5h11" stroke="#909090" stroke-dasharray="1 1"/></svg>
<div class="a" style="left:208px;top:429px;width:13px;height:3px;background:#000"></div>
<div class="a" style="left:243px;top:262px;width:4px;height:14px;background:#C0C0C0"></div>
<svg class="a" style="left:243px;top:264px" width="4" height="10" viewBox="0 0 4 10"><path d="M4 0q-4 5 0 10z" fill="#000"/></svg>
<svg class="a" style="left:247px;top:137px" width="763" height="321" viewBox="247 137 763 321"><rect x="247" y="137" width="763" height="1" fill="#A4A4AC"/><rect x="247" y="138" width="763" height="28" fill="#C0C0C0"/><rect x="247" y="167" width="763" height="291" fill="#FFFFFF"/><rect x="247" y="166" width="763" height="1" fill="#000"/><rect x="262" y="161" width="1" height="5" fill="#000"/><rect x="277" y="161" width="1" height="5" fill="#000"/><rect x="292" y="161" width="1" height="5" fill="#000"/><rect x="307" y="161" width="1" height="5" fill="#000"/><rect x="322" y="160" width="1" height="6" fill="#000"/><rect x="337" y="161" width="1" height="5" fill="#000"/><rect x="352" y="161" width="1" height="5" fill="#000"/><rect x="367" y="161" width="1" height="5" fill="#000"/><rect x="382" y="161" width="1" height="5" fill="#000"/><rect x="397" y="160" width="1" height="6" fill="#000"/><rect x="412" y="161" width="1" height="5" fill="#000"/><rect x="427" y="161" width="1" height="5" fill="#000"/><rect x="442" y="161" width="1" height="5" fill="#000"/><rect x="457" y="161" width="1" height="5" fill="#000"/><rect x="472" y="160" width="1" height="6" fill="#000"/><rect x="487" y="161" width="1" height="5" fill="#000"/><rect x="502" y="161" width="1" height="5" fill="#000"/><rect x="517" y="161" width="1" height="5" fill="#000"/><rect x="532" y="161" width="1" height="5" fill="#000"/><rect x="547" y="160" width="1" height="6" fill="#000"/><rect x="562" y="161" width="1" height="5" fill="#000"/><rect x="577" y="161" width="1" height="5" fill="#000"/><rect x="592" y="161" width="1" height="5" fill="#000"/><rect x="607" y="161" width="1" height="5" fill="#000"/><rect x="621" y="160" width="3" height="6" fill="#000"/><rect x="637" y="161" width="1" height="5" fill="#000"/><rect x="652" y="161" width="1" height="5" fill="#000"/><rect x="667" y="161" width="1" height="5" fill="#000"/><rect x="682" y="161" width="1" height="5" fill="#000"/><rect x="697" y="160" width="1" height="6" fill="#000"/><rect x="712" y="161" width="1" height="5" fill="#000"/><rect x="727" y="161" width="1" height="5" fill="#000"/><rect x="742" y="161" width="1" height="5" fill="#000"/><rect x="757" y="161" width="1" height="5" fill="#000"/><rect x="772" y="160" width="1" height="6" fill="#000"/><rect x="787" y="161" width="1" height="5" fill="#000"/><rect x="802" y="161" width="1" height="5" fill="#000"/><rect x="817" y="161" width="1" height="5" fill="#000"/><rect x="832" y="161" width="1" height="5" fill="#000"/><rect x="847" y="160" width="1" height="6" fill="#000"/><rect x="862" y="161" width="1" height="5" fill="#000"/><rect x="877" y="161" width="1" height="5" fill="#000"/><rect x="892" y="161" width="1" height="5" fill="#000"/><rect x="907" y="161" width="1" height="5" fill="#000"/><rect x="922" y="160" width="1" height="6" fill="#000"/><rect x="937" y="161" width="1" height="5" fill="#000"/><rect x="952" y="161" width="1" height="5" fill="#000"/><rect x="967" y="161" width="1" height="5" fill="#000"/><rect x="982" y="161" width="1" height="5" fill="#000"/><rect x="997" y="160" width="1" height="6" fill="#000"/><text x="309" y="158" font-family="Liberation Mono" font-size="10.5" letter-spacing="-0.3">9.241ms</text><text x="384" y="158" font-family="Liberation Mono" font-size="10.5" letter-spacing="-0.3">9.243ms</text><text x="459" y="158" font-family="Liberation Mono" font-size="10.5" letter-spacing="-0.3">9.246ms</text><text x="534" y="158" font-family="Liberation Mono" font-size="10.5" letter-spacing="-0.3">9.249ms</text><text x="609" y="158" font-family="Liberation Mono" font-size="10.5" letter-spacing="-0.3">9.252ms</text><text x="684" y="158" font-family="Liberation Mono" font-size="10.5" letter-spacing="-0.3">9.255ms</text><text x="759" y="158" font-family="Liberation Mono" font-size="10.5" letter-spacing="-0.3">9.257ms</text><text x="834" y="158" font-family="Liberation Mono" font-size="10.5" letter-spacing="-0.3">9.26ms</text><text x="909" y="158" font-family="Liberation Mono" font-size="10.5" letter-spacing="-0.3">9.263ms</text><text x="984" y="158" font-family="Liberation Mono" font-size="10.5" letter-spacing="-0.3">9.266ms</text><path d="M251.5,169.5H274.5L277.5,196.5L274.5,223.5H251.5L248.5,196.5Z M280.5,169.5H331.5L334.5,196.5L331.5,223.5H280.5L277.5,196.5Z M337.5,169.5H371.5L374.5,196.5L371.5,223.5H337.5L334.5,196.5Z M405.5,169.5H456L459,196.5L456,223.5H405.5L402.5,196.5Z M462,169.5H513.5L516.5,196.5L513.5,223.5H462L459,196.5Z M519.5,169.5H571.5L574.5,196.5L571.5,223.5H519.5L516.5,196.5Z M577.5,169.5H628.5L631.5,196.5L628.5,223.5H577.5L574.5,196.5Z M634.5,169.5H668.5L671.5,196.5L668.5,223.5H634.5L631.5,196.5Z M702.5,169.5H753.5L756.5,196.5L753.5,223.5H702.5L699.5,196.5Z M759.5,169.5H811.5L814.5,196.5L811.5,223.5H759.5L756.5,196.5Z M817.5,169.5H868.5L871.5,196.5L868.5,223.5H817.5L814.5,196.5Z M874.5,169.5H926.5L929.5,196.5L926.5,223.5H874.5L871.5,196.5Z M932.5,169.5H966.5L969.5,196.5L966.5,223.5H932.5L929.5,196.5Z M1000.5,169.5H1051.5L1054.5,196.5L1051.5,223.5H1000.5L997.5,196.5Z" fill="none" stroke="#008000" stroke-width="1"/><text x="305.9" y="202" font-family="Liberation Serif" font-size="14" text-anchor="middle" textLength="30" lengthAdjust="spacingAndGlyphs">0X5D</text><text x="354.0" y="202" font-family="Liberation Serif" font-size="14" text-anchor="middle" textLength="30" lengthAdjust="spacingAndGlyphs">0X5E</text><text x="431.0" y="202" font-family="Liberation Serif" font-size="14" text-anchor="middle" textLength="30" lengthAdjust="spacingAndGlyphs">0X5A</text><text x="487.8" y="202" font-family="Liberation Serif" font-size="14" text-anchor="middle" textLength="30" lengthAdjust="spacingAndGlyphs">0X5B</text><text x="545.5" y="202" font-family="Liberation Serif" font-size="14" text-anchor="middle" textLength="30" lengthAdjust="spacingAndGlyphs">0X5C</text><text x="602.6" y="202" font-family="Liberation Serif" font-size="14" text-anchor="middle" textLength="30" lengthAdjust="spacingAndGlyphs">0X5D</text><text x="651.0" y="202" font-family="Liberation Serif" font-size="14" text-anchor="middle" textLength="30" lengthAdjust="spacingAndGlyphs">0X5E</text><text x="728.0" y="202" font-family="Liberation Serif" font-size="14" text-anchor="middle" textLength="30" lengthAdjust="spacingAndGlyphs">0X5A</text><text x="785.2" y="202" font-family="Liberation Serif" font-size="14" text-anchor="middle" textLength="30" lengthAdjust="spacingAndGlyphs">0X5B</text><text x="842.7" y="202" font-family="Liberation Serif" font-size="14" text-anchor="middle" textLength="30" lengthAdjust="spacingAndGlyphs">0X5C</text><text x="900.2" y="202" font-family="Liberation Serif" font-size="14" text-anchor="middle" textLength="30" lengthAdjust="spacingAndGlyphs">0X5D</text><text x="949.0" y="202" font-family="Liberation Serif" font-size="14" text-anchor="middle" textLength="30" lengthAdjust="spacingAndGlyphs">0X5E</text><text x="1019.0" y="202" font-family="Liberation Serif" font-size="14" text-anchor="middle" textLength="30" lengthAdjust="spacingAndGlyphs">0X5A</text><rect x="247" y="283" width="32" height="1" fill="#800000"/><rect x="278" y="228" width="1" height="56" fill="#800000"/><rect x="278" y="228" width="57" height="2" fill="#800000"/><rect x="334" y="228" width="1" height="56" fill="#800000"/><rect x="334" y="283" width="126" height="1" fill="#800000"/><rect x="459" y="228" width="1" height="56" fill="#800000"/><rect x="459" y="228" width="58" height="2" fill="#800000"/><rect x="516" y="228" width="1" height="56" fill="#800000"/><rect x="516" y="283" width="60" height="1" fill="#800000"/><rect x="575" y="228" width="1" height="56" fill="#800000"/><rect x="575" y="228" width="57" height="2" fill="#800000"/><rect x="631" y="228" width="1" height="56" fill="#800000"/><rect x="631" y="283" width="127" height="1" fill="#800000"/><rect x="757" y="228" width="1" height="56" fill="#800000"/><rect x="757" y="228" width="58" height="2" fill="#800000"/><rect x="814" y="228" width="1" height="56" fill="#800000"/><rect x="814" y="283" width="59" height="1" fill="#800000"/><rect x="872" y="228" width="1" height="56" fill="#800000"/><rect x="872" y="228" width="58" height="2" fill="#800000"/><rect x="929" y="228" width="1" height="56" fill="#800000"/><rect x="929" y="283" width="82" height="1" fill="#800000"/><rect x="247" y="343" width="88" height="1" fill="#FF0000"/><rect x="334" y="288" width="1" height="56" fill="#FF0000"/><rect x="334" y="288" width="183" height="2" fill="#FF0000"/><rect x="516" y="288" width="1" height="56" fill="#FF0000"/><rect x="516" y="343" width="116" height="1" fill="#FF0000"/><rect x="631" y="288" width="1" height="56" fill="#FF0000"/><rect x="631" y="288" width="184" height="2" fill="#FF0000"/><rect x="814" y="288" width="1" height="56" fill="#FF0000"/><rect x="814" y="343" width="116" height="1" fill="#FF0000"/><rect x="929" y="288" width="1" height="56" fill="#FF0000"/><rect x="929" y="288" width="82" height="2" fill="#FF0000"/><rect x="247" y="348" width="144" height="2" fill="#E0803C"/><rect x="390" y="348" width="1" height="56" fill="#E0803C"/><rect x="390" y="403" width="127" height="1" fill="#E0803C"/><rect x="516" y="348" width="1" height="56" fill="#E0803C"/><rect x="516" y="348" width="175" height="2" fill="#E0803C"/><rect x="690" y="348" width="1" height="56" fill="#E0803C"/><rect x="690" y="403" width="125" height="1" fill="#E0803C"/><rect x="814" y="348" width="1" height="56" fill="#E0803C"/><rect x="814" y="348" width="172" height="2" fill="#E0803C"/><rect x="985" y="348" width="1" height="56" fill="#E0803C"/><rect x="985" y="403" width="26" height="1" fill="#E0803C"/><rect x="247" y="408" width="765" height="2" fill="#FFFF00"/><text x="305" y="273" font-family="Liberation Serif" font-size="14" text-anchor="middle" textLength="48" lengthAdjust="spacingAndGlyphs">2.12us</text><text x="409" y="273" font-family="Liberation Serif" font-size="14" text-anchor="middle" textLength="15" lengthAdjust="spacingAndGlyphs">us</text><text x="487" y="273" font-family="Liberation Serif" font-size="14" text-anchor="middle" textLength="48" lengthAdjust="spacingAndGlyphs">2.14us</text><text x="545" y="273" font-family="Liberation Serif" font-size="14" text-anchor="middle" textLength="48" lengthAdjust="spacingAndGlyphs">2.14us</text><text x="602.5" y="273" font-family="Liberation Serif" font-size="14" text-anchor="middle" textLength="48" lengthAdjust="spacingAndGlyphs">2.12us</text><text x="706" y="273" font-family="Liberation Serif" font-size="14" text-anchor="middle" textLength="15" lengthAdjust="spacingAndGlyphs">us</text><text x="785" y="273" font-family="Liberation Serif" font-size="14" text-anchor="middle" textLength="48" lengthAdjust="spacingAndGlyphs">2.14us</text><text x="842.5" y="273" font-family="Liberation Serif" font-size="14" text-anchor="middle" textLength="48" lengthAdjust="spacingAndGlyphs">2.14us</text><text x="900" y="273" font-family="Liberation Serif" font-size="14" text-anchor="middle" textLength="48" lengthAdjust="spacingAndGlyphs">2.12us</text><text x="1006" y="273" font-family="Liberation Serif" font-size="14" text-anchor="middle" textLength="15" lengthAdjust="spacingAndGlyphs">us</text><text x="290.8" y="333" font-family="Liberation Serif" font-size="14" text-anchor="middle" textLength="48" lengthAdjust="spacingAndGlyphs">4.26us</text><text x="425.5" y="333" font-family="Liberation Serif" font-size="14" text-anchor="middle" textLength="48" lengthAdjust="spacingAndGlyphs">6.74us</text><text x="573.8" y="333" font-family="Liberation Serif" font-size="14" text-anchor="middle" textLength="48" lengthAdjust="spacingAndGlyphs">4.26us</text><text x="722.5" y="333" font-family="Liberation Serif" font-size="14" text-anchor="middle" textLength="48" lengthAdjust="spacingAndGlyphs">6.74us</text><text x="871.8" y="333" font-family="Liberation Serif" font-size="14" text-anchor="middle" textLength="48" lengthAdjust="spacingAndGlyphs">4.26us</text><text x="1020.8" y="333" font-family="Liberation Serif" font-size="14" text-anchor="middle" textLength="48" lengthAdjust="spacingAndGlyphs">6.74us</text><text x="324.0" y="393" font-family="Liberation Serif" font-size="14" text-anchor="middle" textLength="48" lengthAdjust="spacingAndGlyphs">6.74us</text><text x="458.8" y="393" font-family="Liberation Serif" font-size="14" text-anchor="middle" textLength="48" lengthAdjust="spacingAndGlyphs">4.26us</text><text x="606.8" y="393" font-family="Liberation Serif" font-size="14" text-anchor="middle" textLength="48" lengthAdjust="spacingAndGlyphs">6.74us</text><text x="755.5" y="393" font-family="Liberation Serif" font-size="14" text-anchor="middle" textLength="48" lengthAdjust="spacingAndGlyphs">4.26us</text><text x="905.0" y="393" font-family="Liberation Serif" font-size="14" text-anchor="middle" textLength="48" lengthAdjust="spacingAndGlyphs">6.74us</text><text x="699" y="453" font-family="Liberation Serif" font-size="14" textLength="22" lengthAdjust="spacingAndGlyphs">3us</text><rect x="374" y="167" width="29" height="60" fill="#808080"/><rect x="374" y="228" width="29" height="229" fill="#808080"/><rect x="671" y="167" width="29" height="60" fill="#808080"/><rect x="671" y="228" width="29" height="229" fill="#808080"/><rect x="969" y="167" width="29" height="60" fill="#808080"/><rect x="969" y="228" width="29" height="229" fill="#808080"/><rect x="247" y="167" width="1.5" height="291" fill="#FF0000"/><rect x="247" y="160" width="2" height="6" fill="#000"/><rect x="248" y="148" width="8" height="11" fill="#000"/><rect x="247" y="147" width="8" height="11" fill="#0080C8"/><rect x="248" y="138" width="6" height="12" fill="#000"/><rect x="247" y="137.5" width="6" height="12" fill="#FF0000"/><path d="M616,138 L629,138 L622.5,145 Z" fill="#FF0000"/><rect x="1001" y="138" width="9" height="12" fill="#0080C8"/><text x="1002" y="148" font-size="10" fill="#F0A000" font-family="Liberation Serif">D</text></svg>
<div class="a" style="left:1010px;top:137px;width:14px;height:321px;background:#FFF9EC"></div>
<div class="a" style="left:1011px;top:139px;width:13px;height:14px;background:linear-gradient(135deg,#C8DCF8,#A8C8F0);border:1px solid #fff;border-radius:2px;box-shadow:0 0 0 0.5px #90B0E0"></div>
<svg class="a" style="left:1012px;top:142px" width="11" height="8"><path d="M1 6l4.5-4 4.5 4" stroke="#4D6185" stroke-width="2" fill="none"/></svg>
<div class="a" style="left:1011px;top:156px;width:13px;height:33px;background:linear-gradient(135deg,#C8DCF8,#A8C8F0);border:1px solid #fff;border-radius:2px;box-shadow:0 0 0 0.5px #90B0E0"></div>
<div class="a" style="left:1015px;top:168px;width:6px;height:7px;border-top:1px solid #fff;border-bottom:1px solid #fff;background:linear-gradient(#A8C8F0 2px,#fff 2px,#fff 3px,#A8C8F0 3px)"></div>
<div class="a" style="left:1011px;top:442px;width:13px;height:14px;background:linear-gradient(135deg,#C8DCF8,#A8C8F0);border:1px solid #fff;border-radius:2px;box-shadow:0 0 0 0.5px #90B0E0"></div>
<svg class="a" style="left:1012px;top:445px" width="11" height="8"><path d="M1 2l4.5 4 4.5-4" stroke="#4D6185" stroke-width="2" fill="none"/></svg>
<div class="a" style="left:0;top:457px;width:1024px;height:18px;background:#FFF9EC"></div>
<div class="a" style="left:0px;top:457px;width:120px;height:17px;border-left:1px solid #A4A4AC;border-right:1px solid #A4A4AC;border-bottom:1px solid #A4A4AC"></div>
<div class="a" style="left:123px;top:457px;width:60px;height:17px;border-left:1px solid #A4A4AC;border-right:1px solid #A4A4AC;border-bottom:1px solid #A4A4AC"></div>
<div class="a" style="left:186px;top:457px;width:57px;height:17px;border-left:1px solid #A4A4AC;border-right:1px solid #A4A4AC;border-bottom:1px solid #A4A4AC"></div>
<div class="a" style="left:247px;top:457px;width:763px;height:17px;border-left:1px solid #A4A4AC;border-right:1px solid #A4A4AC;border-bottom:1px solid #A4A4AC"></div>
<div class="a" style="left:2px;top:459px;width:15px;height:14px;background:linear-gradient(135deg,#C8DCF8,#A8C8F0);border:1px solid #fff;border-radius:2px;box-shadow:0 0 0 0.5px #90B0E0"></div>
<svg class="a" style="left:6px;top:461px" width="8" height="10"><path d="M6 1L2 5l4 4" stroke="#4D6185" stroke-width="2" fill="none"/></svg>
<div class="a" style="left:18px;top:459px;width:83px;height:14px;background:linear-gradient(135deg,#C8DCF8,#A8C8F0);border:1px solid #fff;border-radius:2px;box-shadow:0 0 0 0.5px #90B0E0"></div>
<div class="a" style="left:56px;top:463px;width:7px;height:6px;background:repeating-linear-gradient(90deg,#fff 0 1px,transparent 1px 2px)"></div>
<div class="a" style="left:103px;top:459px;width:15px;height:14px;background:linear-gradient(135deg,#C8DCF8,#A8C8F0);border:1px solid #fff;border-radius:2px;box-shadow:0 0 0 0.5px #90B0E0"></div>
<svg class="a" style="left:107px;top:461px" width="8" height="10"><path d="M2 1l4 4-4 4" stroke="#4D6185" stroke-width="2" fill="none"/></svg>
<div class="a" style="left:125px;top:459px;width:15px;height:14px;background:linear-gradient(135deg,#C8DCF8,#A8C8F0);border:1px solid #fff;border-radius:2px;box-shadow:0 0 0 0.5px #90B0E0"></div>
<svg class="a" style="left:129px;top:461px" width="8" height="10"><path d="M6 1L2 5l4 4" stroke="#4D6185" stroke-width="2" fill="none"/></svg>
<div class="a" style="left:143px;top:459px;width:20px;height:14px;background:linear-gradient(135deg,#C8DCF8,#A8C8F0);border:1px solid #fff;border-radius:2px;box-shadow:0 0 0 0.5px #90B0E0"></div>
<div class="a" style="left:150px;top:463px;width:7px;height:6px;background:repeating-linear-gradient(90deg,#fff 0 1px,transparent 1px 2px)"></div>
<div class="a" style="left:166px;top:459px;width:15px;height:14px;background:linear-gradient(135deg,#C8DCF8,#A8C8F0);border:1px solid #fff;border-radius:2px;box-shadow:0 0 0 0.5px #90B0E0"></div>
<svg class="a" style="left:170px;top:461px" width="8" height="10"><path d="M2 1l4 4-4 4" stroke="#4D6185" stroke-width="2" fill="none"/></svg>
<div class="a" style="left:188px;top:459px;width:15px;height:14px;background:linear-gradient(135deg,#C8DCF8,#A8C8F0);border:1px solid #fff;border-radius:2px;box-shadow:0 0 0 0.5px #90B0E0"></div>
<svg class="a" style="left:192px;top:461px" width="8" height="10"><path d="M6 1L2 5l4 4" stroke="#4D6185" stroke-width="2" fill="none"/></svg>
<div class="a" style="left:205px;top:459px;width:20px;height:14px;background:linear-gradient(135deg,#C8DCF8,#A8C8F0);border:1px solid #fff;border-radius:2px;box-shadow:0 0 0 0.5px #90B0E0"></div>
<div class="a" style="left:212px;top:463px;width:7px;height:6px;background:repeating-linear-gradient(90deg,#fff 0 1px,transparent 1px 2px)"></div>
<div class="a" style="left:225px;top:459px;width:15px;height:14px;background:linear-gradient(135deg,#C8DCF8,#A8C8F0);border:1px solid #fff;border-radius:2px;box-shadow:0 0 0 0.5px #90B0E0"></div>
<svg class="a" style="left:229px;top:461px" width="8" height="10"><path d="M2 1l4 4-4 4" stroke="#4D6185" stroke-width="2" fill="none"/></svg>
<div class="a" style="left:0px;top:474px;width:1024px;height:1px;background:#A4A4AC"></div>
<div class="a" style="left:249px;top:459px;width:15px;height:14px;background:linear-gradient(135deg,#C8DCF8,#A8C8F0);border:1px solid #fff;border-radius:2px;box-shadow:0 0 0 0.5px #90B0E0"></div>
<svg class="a" style="left:253px;top:461px" width="8" height="10"><path d="M6 1L2 5l4 4" stroke="#4D6185" stroke-width="2" fill="none"/></svg>
<div class="a" style="left:265px;top:466px;width:728px;height:8px;background:#fff"></div>
<div class="a" style="left:625px;top:459px;width:7px;height:14px;background:linear-gradient(135deg,#C8DCF8,#A8C8F0);border:1px solid #fff;border-radius:2px;box-shadow:0 0 0 0.5px #90B0E0"></div>
<div class="a" style="left:993px;top:459px;width:15px;height:14px;background:linear-gradient(135deg,#C8DCF8,#A8C8F0);border:1px solid #fff;border-radius:2px;box-shadow:0 0 0 0.5px #90B0E0"></div>
<svg class="a" style="left:997px;top:461px" width="8" height="10"><path d="M2 1l4 4-4 4" stroke="#4D6185" stroke-width="2" fill="none"/></svg>
<div class="a" style="left:921px;top:406px;width:102px;height:32px;background:#FFFAEF;border:1px solid #000"></div>
<div class="a mono" style="left:924px;top:409px;font-size:10px;letter-spacing:-0.1px;line-height:14px">Enable bar<br>[Time] = 1.673ms</div>
<svg class="a" style="left:4px;top:480px" width="7" height="7"><path d="M0.5 0.5L6.5 6.5M6.5 0.5L0.5 6.5" stroke="#000" stroke-width="1.6"/></svg>
<div class="a" style="left:5px;top:494px;width:1px;height:251px;background:#A8A8A8"></div>
<div class="a" style="left:8px;top:494px;width:1px;height:251px;background:#A8A8A8"></div>
<div class="a" style="left:6px;top:494px;width:1px;height:251px;background:#fff"></div>
<div class="a" style="left:21px;top:478px;width:57px;height:21px;background:#FFF9EC;border-left:1px solid #fff;border-top:1px solid #fff;border-right:2px solid #9D9DA1;border-bottom:2px solid #9D9DA1"></div>
<div class="a cjk" style="left:21px;top:482px;width:57px;text-align:center">设定...</div>
<div class="a" style="left:86px;top:478px;width:57px;height:21px;background:#FFF9EC;border:1px solid #000;box-shadow:inset -1px -1px 0 #9D9DA1,inset 1px 1px 0 #fff"></div>
<div class="a cjk" style="left:86px;top:482px;width:57px;text-align:center">刷新</div>
<div class="a" style="left:150px;top:478px;width:57px;height:21px;background:#FFF9EC;border-left:1px solid #fff;border-top:1px solid #fff;border-right:2px solid #9D9DA1;border-bottom:2px solid #9D9DA1"></div>
<div class="a cjk" style="left:150px;top:482px;width:57px;text-align:center">导出...</div>
<div class="a" style="left:213px;top:478px;width:140px;height:21px;background:#FFF9EC;border-left:1px solid #fff;border-top:1px solid #fff;border-right:2px solid #9D9DA1;border-bottom:2px solid #9D9DA1"></div>
<div class="a cjk" style="left:213px;top:482px;width:140px;text-align:center">封包与波形同步设定</div>
<div class="a" style="left:17px;top:506px;width:988px;height:240px;background:#fff;border-top:1px solid #808080;border-left:1px solid #808080;overflow:hidden">
<div class="a" style="left:1px;top:1px;width:182px;height:36px;border:1px solid #000;background:#fff"></div>
<div class="a" style="left:1px;top:1px;width:182px;height:17px;background:#3F3F87;border:1px solid #000;border-bottom:none"></div>
<div class="a" style="left:1px;top:18px;width:181px;height:1px;background:#000"></div>
<div class="a t" style="left:1px;top:2px;width:120px;text-align:center;color:#fff;font-size:14px">名称</div>
<div class="a t" style="left:1px;top:21px;width:120px;text-align:center;font-size:14px;top:19px">限定子间隔棒</div>
<div class="a" style="left:121px;top:1px;width:1px;height:36px;background:#000"></div>
<div class="a t" style="left:121px;top:2px;width:61px;text-align:center;color:#fff;font-size:14px">起始点</div>
<div class="a t" style="left:121px;top:21px;width:61px;text-align:center;font-size:12px;">0ns</div>
<div class="a" style="left:184px;top:1px;width:241px;height:36px;border:1px solid #000;background:#fff"></div>
<div class="a" style="left:184px;top:1px;width:241px;height:17px;background:#40C040;border:1px solid #000;border-bottom:none"></div>
<div class="a" style="left:184px;top:18px;width:240px;height:1px;background:#000"></div>
<div class="a t" style="left:184px;top:2px;width:40px;text-align:center;color:#fff;font-size:14px">资料</div>
<div class="a t" style="left:184px;top:21px;width:40px;text-align:center;font-size:12px">0X5A</div>
<div class="a" style="left:224px;top:1px;width:1px;height:36px;background:#000"></div>
<div class="a t" style="left:224px;top:2px;width:40px;text-align:center;color:#fff;font-size:14px">资料</div>
<div class="a t" style="left:224px;top:21px;width:40px;text-align:center;font-size:12px">0X5B</div>
<div class="a" style="left:264px;top:1px;width:1px;height:36px;background:#000"></div>
<div class="a t" style="left:264px;top:2px;width:40px;text-align:center;color:#fff;font-size:14px">资料</div>
<div class="a t" style="left:264px;top:21px;width:40px;text-align:center;font-size:12px">0X58</div>
<div class="a" style="left:304px;top:1px;width:1px;height:36px;background:#000"></div>
<div class="a t" style="left:304px;top:2px;width:40px;text-align:center;color:#fff;font-size:14px">资料</div>
<div class="a t" style="left:304px;top:21px;width:40px;text-align:center;font-size:12px">0X5C</div>
<div class="a" style="left:344px;top:1px;width:1px;height:36px;background:#000"></div>
<div class="a t" style="left:344px;top:2px;width:40px;text-align:center;color:#fff;font-size:14px">资料</div>
<div class="a t" style="left:344px;top:21px;width:40px;text-align:center;font-size:12px">0X5D</div>
<div class="a" style="left:384px;top:1px;width:1px;height:36px;background:#000"></div>
<div class="a t" style="left:384px;top:2px;width:40px;text-align:center;color:#fff;font-size:14px">资料</div>
<div class="a t" style="left:384px;top:21px;width:40px;text-align:center;font-size:12px">0X5E</div>
<div class="a" style="left:427px;top:1px;width:41px;height:36px;border:1px solid #000;background:#fff"></div>
<div class="a" style="left:427px;top:1px;width:41px;height:17px;background:#80C0C0;border:1px solid #000;border-bottom:none"></div>
<div class="a" style="left:427px;top:18px;width:40px;height:1px;background:#000"></div>
<div class="a t" style="left:427px;top:2px;width:40px;text-align:center;color:#fff;font-size:14px">长度</div>
<div class="a t" style="left:427px;top:21px;width:40px;text-align:center;font-size:12px">11us</div>
<div class="a" style="left:1px;top:39px;width:251px;height:36px;border:1px solid #000;background:#fff"></div>
<div class="a" style="left:1px;top:39px;width:251px;height:17px;background:#3F3F87;border:1px solid #000;border-bottom:none"></div>
<div class="a" style="left:1px;top:56px;width:250px;height:1px;background:#000"></div>
<div class="a t" style="left:1px;top:40px;width:60px;text-align:center;color:#fff;font-size:14px">封包 #</div>
<div class="a t" style="left:1px;top:59px;width:60px;text-align:center;font-size:12px;">2</div>
<div class="a" style="left:61px;top:39px;width:1px;height:36px;background:#000"></div>
<div class="a t" style="left:61px;top:40px;width:130px;text-align:center;color:#fff;font-size:14px">名称</div>
<div class="a t" style="left:61px;top:59px;width:130px;text-align:center;font-size:12px;">Bus1(General)</div>
<div class="a" style="left:191px;top:39px;width:1px;height:36px;background:#000"></div>
<div class="a t" style="left:191px;top:40px;width:60px;text-align:center;color:#fff;font-size:14px">起始点</div>
<div class="a t" style="left:191px;top:59px;width:60px;text-align:center;font-size:12px;">11us</div>
<div class="a" style="left:254px;top:39px;width:281px;height:36px;border:1px solid #000;background:#fff"></div>
<div class="a" style="left:254px;top:39px;width:281px;height:17px;background:#40C040;border:1px solid #000;border-bottom:none"></div>
<div class="a" style="left:254px;top:56px;width:280px;height:1px;background:#000"></div>
<div class="a t" style="left:254px;top:40px;width:40px;text-align:center;color:#fff;font-size:14px">资料</div>
<div class="a t" style="left:254px;top:59px;width:40px;text-align:center;font-size:12px">0X5A</div>
<div class="a" style="left:294px;top:39px;width:1px;height:36px;background:#000"></div>
<div class="a t" style="left:294px;top:40px;width:40px;text-align:center;color:#fff;font-size:14px">资料</div>
<div class="a t" style="left:294px;top:59px;width:40px;text-align:center;font-size:12px">0X5B</div>
<div class="a" style="left:334px;top:39px;width:1px;height:36px;background:#000"></div>
<div class="a t" style="left:334px;top:40px;width:40px;text-align:center;color:#fff;font-size:14px">资料</div>
<div class="a t" style="left:334px;top:59px;width:40px;text-align:center;font-size:12px">0X5A</div>
<div class="a" style="left:374px;top:39px;width:1px;height:36px;background:#000"></div>
<div class="a t" style="left:374px;top:40px;width:40px;text-align:center;color:#fff;font-size:14px">资料</div>
<div class="a t" style="left:374px;top:59px;width:40px;text-align:center;font-size:12px">0X5C</div>
<div class="a" style="left:414px;top:39px;width:1px;height:36px;background:#000"></div>
<div class="a t" style="left:414px;top:40px;width:40px;text-align:center;color:#fff;font-size:14px">资料</div>
<div class="a t" style="left:414px;top:59px;width:40px;text-align:center;font-size:12px">0X5D</div>
<div class="a" style="left:454px;top:39px;width:1px;height:36px;background:#000"></div>
<div class="a t" style="left:454px;top:40px;width:40px;text-align:center;color:#fff;font-size:14px">资料</div>
<div class="a t" style="left:454px;top:59px;width:40px;text-align:center;font-size:12px">0X5E</div>
<div class="a" style="left:494px;top:39px;width:1px;height:36px;background:#000"></div>
<div class="a t" style="left:494px;top:40px;width:40px;text-align:center;color:#fff;font-size:14px">资料</div>
<div class="a t" style="left:494px;top:59px;width:40px;text-align:center;font-size:12px">0X5F</div>
<div class="a" style="left:537px;top:39px;width:61px;height:36px;border:1px solid #000;background:#fff"></div>
<div class="a" style="left:537px;top:39px;width:61px;height:17px;background:#80C0C0;border:1px solid #000;border-bottom:none"></div>
<div class="a" style="left:537px;top:56px;width:60px;height:1px;background:#000"></div>
<div class="a t" style="left:537px;top:40px;width:60px;text-align:center;color:#fff;font-size:14px">长度</div>
<div class="a t" style="left:537px;top:59px;width:60px;text-align:center;font-size:12px">12.8us</div>
<div class="a" style="left:1px;top:77px;width:182px;height:36px;border:1px solid #000;background:#fff"></div>
<div class="a" style="left:1px;top:77px;width:182px;height:17px;background:#3F3F87;border:1px solid #000;border-bottom:none"></div>
<div class="a" style="left:1px;top:94px;width:181px;height:1px;background:#000"></div>
<div class="a t" style="left:1px;top:78px;width:120px;text-align:center;color:#fff;font-size:14px">名称</div>
<div class="a t" style="left:1px;top:97px;width:120px;text-align:center;font-size:14px;top:95px">限定子间隔棒</div>
<div class="a" style="left:121px;top:77px;width:1px;height:36px;background:#000"></div>
<div class="a t" style="left:121px;top:78px;width:61px;text-align:center;color:#fff;font-size:14px">起始点</div>
<div class="a t" style="left:121px;top:97px;width:61px;text-align:center;font-size:12px;">23.8us</div>
<div class="a" style="left:184px;top:77px;width:41px;height:36px;border:1px solid #000;background:#fff"></div>
<div class="a" style="left:184px;top:77px;width:41px;height:17px;background:#40C040;border:1px solid #000;border-bottom:none"></div>
<div class="a" style="left:184px;top:94px;width:40px;height:1px;background:#000"></div>
<div class="a t" style="left:184px;top:78px;width:40px;text-align:center;color:#fff;font-size:14px">资料</div>
<div class="a t" style="left:184px;top:97px;width:40px;text-align:center;font-size:12px">0X60</div>
<div class="a" style="left:227px;top:77px;width:61px;height:36px;border:1px solid #000;background:#fff"></div>
<div class="a" style="left:227px;top:77px;width:61px;height:17px;background:#80C0C0;border:1px solid #000;border-bottom:none"></div>
<div class="a" style="left:227px;top:94px;width:60px;height:1px;background:#000"></div>
<div class="a t" style="left:227px;top:78px;width:60px;text-align:center;color:#fff;font-size:14px">长度</div>
<div class="a t" style="left:227px;top:97px;width:60px;text-align:center;font-size:12px">2.46us</div>
<div class="a" style="left:1px;top:115px;width:191px;height:36px;border:1px solid #000;background:#fff"></div>
<div class="a" style="left:1px;top:115px;width:191px;height:17px;background:#3F3F87;border:1px solid #000;border-bottom:none"></div>
<div class="a" style="left:1px;top:132px;width:190px;height:1px;background:#000"></div>
<div class="a t" style="left:1px;top:116px;width:120px;text-align:center;color:#fff;font-size:14px">名称</div>
<div class="a t" style="left:1px;top:135px;width:120px;text-align:center;font-size:14px;top:133px">限定子间隔棒</div>
<div class="a" style="left:121px;top:115px;width:1px;height:36px;background:#000"></div>
<div class="a t" style="left:121px;top:116px;width:70px;text-align:center;color:#fff;font-size:14px">起始点</div>
<div class="a t" style="left:121px;top:135px;width:70px;text-align:center;font-size:12px;">26.26us</div>
<div class="a" style="left:194px;top:115px;width:201px;height:36px;border:1px solid #000;background:#fff"></div>
<div class="a" style="left:194px;top:115px;width:201px;height:17px;background:#40C040;border:1px solid #000;border-bottom:none"></div>
<div class="a" style="left:194px;top:132px;width:200px;height:1px;background:#000"></div>
<div class="a t" style="left:194px;top:116px;width:40px;text-align:center;color:#fff;font-size:14px">资料</div>
<div class="a t" style="left:194px;top:135px;width:40px;text-align:center;font-size:12px">0X5A</div>
<div class="a" style="left:234px;top:115px;width:1px;height:36px;background:#000"></div>
<div class="a t" style="left:234px;top:116px;width:40px;text-align:center;color:#fff;font-size:14px">资料</div>
<div class="a t" style="left:234px;top:135px;width:40px;text-align:center;font-size:12px">0X5B</div>
<div class="a" style="left:274px;top:115px;width:1px;height:36px;background:#000"></div>
<div class="a t" style="left:274px;top:116px;width:40px;text-align:center;color:#fff;font-size:14px">资料</div>
<div class="a t" style="left:274px;top:135px;width:40px;text-align:center;font-size:12px">0X5C</div>
<div class="a" style="left:314px;top:115px;width:1px;height:36px;background:#000"></div>
<div class="a t" style="left:314px;top:116px;width:40px;text-align:center;color:#fff;font-size:14px">资料</div>
<div class="a t" style="left:314px;top:135px;width:40px;text-align:center;font-size:12px">0X5D</div>
<div class="a" style="left:354px;top:115px;width:1px;height:36px;background:#000"></div>
<div class="a t" style="left:354px;top:116px;width:40px;text-align:center;color:#fff;font-size:14px">资料</div>
<div class="a t" style="left:354px;top:135px;width:40px;text-align:center;font-size:12px">0X5E</div>
<div class="a" style="left:397px;top:115px;width:41px;height:36px;border:1px solid #000;background:#fff"></div>
<div class="a" style="left:397px;top:115px;width:41px;height:17px;background:#80C0C0;border:1px solid #000;border-bottom:none"></div>
<div class="a" style="left:397px;top:132px;width:40px;height:1px;background:#000"></div>
<div class="a t" style="left:397px;top:116px;width:40px;text-align:center;color:#fff;font-size:14px">长度</div>
<div class="a t" style="left:397px;top:135px;width:40px;text-align:center;font-size:12px">11us</div>
<div class="a" style="left:1px;top:153px;width:191px;height:36px;border:1px solid #000;background:#fff"></div>
<div class="a" style="left:1px;top:153px;width:191px;height:17px;background:#3F3F87;border:1px solid #000;border-bottom:none"></div>
<div class="a" style="left:1px;top:170px;width:190px;height:1px;background:#000"></div>
<div class="a t" style="left:1px;top:154px;width:120px;text-align:center;color:#fff;font-size:14px">名称</div>
<div class="a t" style="left:1px;top:173px;width:120px;text-align:center;font-size:14px;top:171px">限定子间隔棒</div>
<div class="a" style="left:121px;top:153px;width:1px;height:36px;background:#000"></div>
<div class="a t" style="left:121px;top:154px;width:70px;text-align:center;color:#fff;font-size:14px">起始点</div>
<div class="a t" style="left:121px;top:173px;width:70px;text-align:center;font-size:12px;">37.26us</div>
<div class="a" style="left:194px;top:153px;width:241px;height:36px;border:1px solid #000;background:#fff"></div>
<div class="a" style="left:194px;top:153px;width:241px;height:17px;background:#40C040;border:1px solid #000;border-bottom:none"></div>
<div class="a" style="left:194px;top:170px;width:240px;height:1px;background:#000"></div>
<div class="a t" style="left:194px;top:154px;width:40px;text-align:center;color:#fff;font-size:14px">资料</div>
<div class="a t" style="left:194px;top:173px;width:40px;text-align:center;font-size:12px">0X5A</div>
<div class="a" style="left:234px;top:153px;width:1px;height:36px;background:#000"></div>
<div class="a t" style="left:234px;top:154px;width:40px;text-align:center;color:#fff;font-size:14px">资料</div>
<div class="a t" style="left:234px;top:173px;width:40px;text-align:center;font-size:12px">0X5B</div>
<div class="a" style="left:274px;top:153px;width:1px;height:36px;background:#000"></div>
<div class="a t" style="left:274px;top:154px;width:40px;text-align:center;color:#fff;font-size:14px">资料</div>
<div class="a t" style="left:274px;top:173px;width:40px;text-align:center;font-size:12px">0X58</div>
<div class="a" style="left:314px;top:153px;width:1px;height:36px;background:#000"></div>
<div class="a t" style="left:314px;top:154px;width:40px;text-align:center;color:#fff;font-size:14px">资料</div>
<div class="a t" style="left:314px;top:173px;width:40px;text-align:center;font-size:12px">0X5C</div>
<div class="a" style="left:354px;top:153px;width:1px;height:36px;background:#000"></div>
<div class="a t" style="left:354px;top:154px;width:40px;text-align:center;color:#fff;font-size:14px">资料</div>
<div class="a t" style="left:354px;top:173px;width:40px;text-align:center;font-size:12px">0X5D</div>
<div class="a" style="left:394px;top:153px;width:1px;height:36px;background:#000"></div>
<div class="a t" style="left:394px;top:154px;width:40px;text-align:center;color:#fff;font-size:14px">资料</div>
<div class="a t" style="left:394px;top:173px;width:40px;text-align:center;font-size:12px">0X5E</div>
<div class="a" style="left:437px;top:153px;width:41px;height:36px;border:1px solid #000;background:#fff"></div>
<div class="a" style="left:437px;top:153px;width:41px;height:17px;background:#80C0C0;border:1px solid #000;border-bottom:none"></div>
<div class="a" style="left:437px;top:170px;width:40px;height:1px;background:#000"></div>
<div class="a t" style="left:437px;top:154px;width:40px;text-align:center;color:#fff;font-size:14px">长度</div>
<div class="a t" style="left:437px;top:173px;width:40px;text-align:center;font-size:12px">11us</div>
<div class="a" style="left:1px;top:191px;width:191px;height:36px;border:1px solid #000;background:#fff"></div>
<div class="a" style="left:1px;top:191px;width:191px;height:17px;background:#3F3F87;border:1px solid #000;border-bottom:none"></div>
<div class="a" style="left:1px;top:208px;width:190px;height:1px;background:#000"></div>
<div class="a t" style="left:1px;top:192px;width:120px;text-align:center;color:#fff;font-size:14px">名称</div>
<div class="a t" style="left:1px;top:211px;width:120px;text-align:center;font-size:14px;top:209px">限定子间隔棒</div>
<div class="a" style="left:121px;top:191px;width:1px;height:36px;background:#000"></div>
<div class="a t" style="left:121px;top:192px;width:70px;text-align:center;color:#fff;font-size:14px">起始点</div>
<div class="a t" style="left:121px;top:211px;width:70px;text-align:center;font-size:12px;">48.26us</div>
<div class="a" style="left:194px;top:191px;width:241px;height:36px;border:1px solid #000;background:#fff"></div>
<div class="a" style="left:194px;top:191px;width:241px;height:17px;background:#40C040;border:1px solid #000;border-bottom:none"></div>
<div class="a" style="left:194px;top:208px;width:240px;height:1px;background:#000"></div>
<div class="a t" style="left:194px;top:192px;width:40px;text-align:center;color:#fff;font-size:14px">资料</div>
<div class="a t" style="left:194px;top:211px;width:40px;text-align:center;font-size:12px">0X5A</div>
<div class="a" style="left:234px;top:191px;width:1px;height:36px;background:#000"></div>
<div class="a t" style="left:234px;top:192px;width:40px;text-align:center;color:#fff;font-size:14px">资料</div>
<div class="a t" style="left:234px;top:211px;width:40px;text-align:center;font-size:12px">0X5B</div>
<div class="a" style="left:274px;top:191px;width:1px;height:36px;background:#000"></div>
<div class="a t" style="left:274px;top:192px;width:40px;text-align:center;color:#fff;font-size:14px">资料</div>
<div class="a t" style="left:274px;top:211px;width:40px;text-align:center;font-size:12px">0X5C</div>
<div class="a" style="left:314px;top:191px;width:1px;height:36px;background:#000"></div>
<div class="a t" style="left:314px;top:192px;width:40px;text-align:center;color:#fff;font-size:14px">资料</div>
<div class="a t" style="left:314px;top:211px;width:40px;text-align:center;font-size:12px">0X5D</div>
<div class="a" style="left:354px;top:191px;width:1px;height:36px;background:#000"></div>
<div class="a t" style="left:354px;top:192px;width:40px;text-align:center;color:#fff;font-size:14px">资料</div>
<div class="a t" style="left:354px;top:211px;width:40px;text-align:center;font-size:12px">0X5C</div>
<div class="a" style="left:394px;top:191px;width:1px;height:36px;background:#000"></div>
<div class="a t" style="left:394px;top:192px;width:40px;text-align:center;color:#fff;font-size:14px">资料</div>
<div class="a t" style="left:394px;top:211px;width:40px;text-align:center;font-size:12px">0X5E</div>
<div class="a" style="left:437px;top:191px;width:41px;height:36px;border:1px solid #000;background:#fff"></div>
<div class="a" style="left:437px;top:191px;width:41px;height:17px;background:#80C0C0;border:1px solid #000;border-bottom:none"></div>
<div class="a" style="left:437px;top:208px;width:40px;height:1px;background:#000"></div>
<div class="a t" style="left:437px;top:192px;width:40px;text-align:center;color:#fff;font-size:14px">长度</div>
<div class="a t" style="left:437px;top:211px;width:40px;text-align:center;font-size:12px">11us</div>
<div class="a" style="left:1px;top:229px;width:261px;height:36px;border:1px solid #000;background:#fff"></div>
<div class="a" style="left:1px;top:229px;width:261px;height:17px;background:#3F3F87;border:1px solid #000;border-bottom:none"></div>
<div class="a" style="left:1px;top:246px;width:260px;height:1px;background:#000"></div>
<div class="a t" style="left:1px;top:230px;width:60px;text-align:center;color:#fff;font-size:14px">封包 #</div>
<div class="a t" style="left:1px;top:249px;width:60px;text-align:center;font-size:12px;">3</div>
<div class="a" style="left:61px;top:229px;width:1px;height:36px;background:#000"></div>
<div class="a t" style="left:61px;top:230px;width:130px;text-align:center;color:#fff;font-size:14px">名称</div>
<div class="a t" style="left:61px;top:249px;width:130px;text-align:center;font-size:12px;">Bus1(General)</div>
<div class="a" style="left:191px;top:229px;width:1px;height:36px;background:#000"></div>
<div class="a t" style="left:191px;top:230px;width:70px;text-align:center;color:#fff;font-size:14px">起始点</div>
<div class="a t" style="left:191px;top:249px;width:70px;text-align:center;font-size:12px;">59.26us</div>
<div class="a" style="left:264px;top:229px;width:281px;height:36px;border:1px solid #000;background:#fff"></div>
<div class="a" style="left:264px;top:229px;width:281px;height:17px;background:#40C040;border:1px solid #000;border-bottom:none"></div>
<div class="a" style="left:264px;top:246px;width:280px;height:1px;background:#000"></div>
<div class="a t" style="left:264px;top:230px;width:40px;text-align:center;color:#fff;font-size:14px">资料</div>
<div class="a t" style="left:264px;top:249px;width:40px;text-align:center;font-size:12px">0X5A</div>
<div class="a" style="left:304px;top:229px;width:1px;height:36px;background:#000"></div>
<div class="a t" style="left:304px;top:230px;width:40px;text-align:center;color:#fff;font-size:14px">资料</div>
<div class="a t" style="left:304px;top:249px;width:40px;text-align:center;font-size:12px">0X5B</div>
<div class="a" style="left:344px;top:229px;width:1px;height:36px;background:#000"></div>
<div class="a t" style="left:344px;top:230px;width:40px;text-align:center;color:#fff;font-size:14px">资料</div>
<div class="a t" style="left:344px;top:249px;width:40px;text-align:center;font-size:12px">0X5A</div>
<div class="a" style="left:384px;top:229px;width:1px;height:36px;background:#000"></div>
<div class="a t" style="left:384px;top:230px;width:40px;text-align:center;color:#fff;font-size:14px">资料</div>
<div class="a t" style="left:384px;top:249px;width:40px;text-align:center;font-size:12px">0X5C</div>
<div class="a" style="left:424px;top:229px;width:1px;height:36px;background:#000"></div>
<div class="a t" style="left:424px;top:230px;width:40px;text-align:center;color:#fff;font-size:14px">资料</div>
<div class="a t" style="left:424px;top:249px;width:40px;text-align:center;font-size:12px">0X5D</div>
<div class="a" style="left:464px;top:229px;width:1px;height:36px;background:#000"></div>
<div class="a t" style="left:464px;top:230px;width:40px;text-align:center;color:#fff;font-size:14px">资料</div>
<div class="a t" style="left:464px;top:249px;width:40px;text-align:center;font-size:12px">0X5E</div>
<div class="a" style="left:504px;top:229px;width:1px;height:36px;background:#000"></div>
<div class="a t" style="left:504px;top:230px;width:40px;text-align:center;color:#fff;font-size:14px">资料</div>
<div class="a t" style="left:504px;top:249px;width:40px;text-align:center;font-size:12px">0X5F</div>
<div class="a" style="left:547px;top:229px;width:61px;height:36px;border:1px solid #000;background:#fff"></div>
<div class="a" style="left:547px;top:229px;width:61px;height:17px;background:#80C0C0;border:1px solid #000;border-bottom:none"></div>
<div class="a" style="left:547px;top:246px;width:60px;height:1px;background:#000"></div>
<div class="a t" style="left:547px;top:230px;width:60px;text-align:center;color:#fff;font-size:14px">长度</div>
<div class="a t" style="left:547px;top:249px;width:60px;text-align:center;font-size:12px">12.8us</div>
</div>
<svg class="a" style="left:19px;top:633px" width="7" height="14" viewBox="0 0 7 14"><path d="M0 0L7 7L0 14z" fill="#F00000"/></svg>
<div class="a" style="left:1005px;top:507px;width:19px;height:240px;background:#FFFCF4"></div>
<div class="a" style="left:1005px;top:507px;width:19px;height:13px;background:#FFF9EC;border-bottom:2px solid #9C8FB4;border-right:1px solid #9C8FB4"></div>
<div class="a" style="left:1010px;top:511px;width:0;height:0;border-left:4px solid transparent;border-right:4px solid transparent;border-bottom:4px solid #000"></div>
<div class="a" style="left:1005px;top:734px;width:19px;height:13px;background:#FFF9EC;border-bottom:2px solid #9C8FB4;border-right:1px solid #9C8FB4"></div>
<div class="a tri" style="left:1010px;top:739px"></div>
<div class="a" style="left:1005px;top:523px;width:19px;height:6px;background:#FFF9EC;border-top:1px solid #9C8FB4;border-bottom:2px solid #9C8FB4"></div>
<div class="a" style="left:0px;top:751px;width:1024px;height:1px;background:#A8A8A8"></div>
<div class="a cjk" style="left:3px;top:755px">准备</div>
<div class="a" style="left:464px;top:755px;width:388px;height:14px;border-top:1px solid #A8A8A8;border-left:1px solid #A8A8A8"></div>
<div class="a" style="left:855px;top:755px;width:65px;height:14px;border-top:1px solid #A8A8A8;border-left:1px solid #A8A8A8"></div>
<div class="a cjk" style="left:857px;top:758px">停止!</div>
<div class="a" style="left:923px;top:755px;width:85px;height:14px;border-top:1px solid #A8A8A8;border-left:1px solid #A8A8A8"></div>
<div class="a cjk" style="left:925px;top:758px">正常</div>
<div class="a" style="left:0;top:766px;width:1024px;height:2px;background:#3A6FD8"></div>
</body></html>
